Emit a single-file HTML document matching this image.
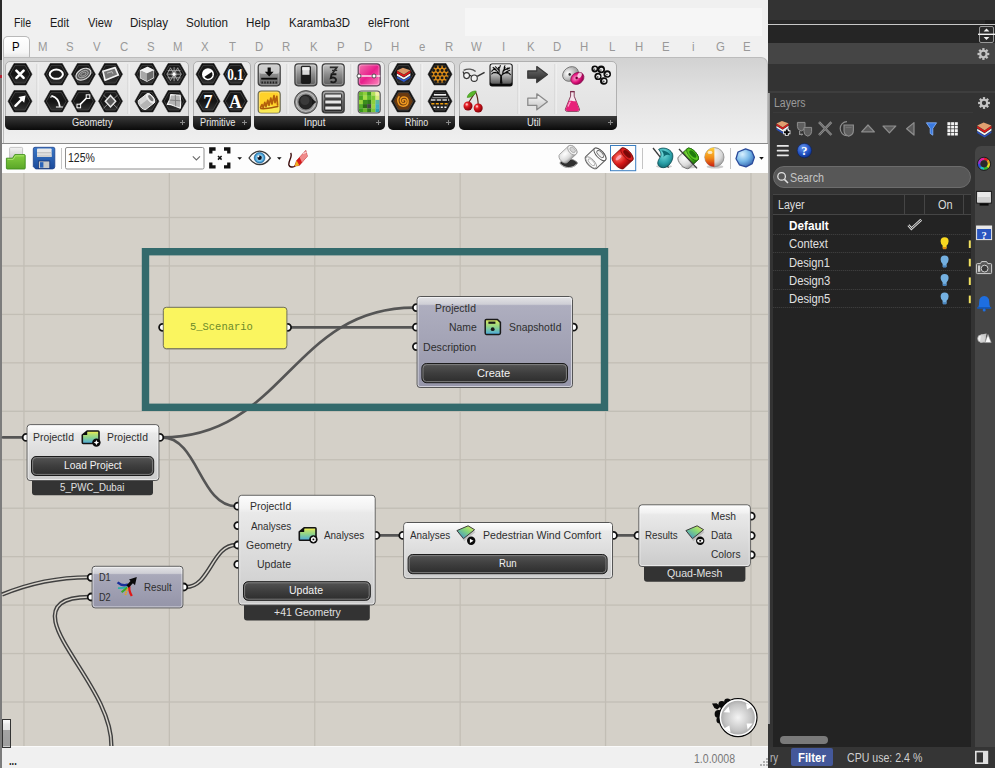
<!DOCTYPE html>
<html><head><meta charset="utf-8"><title>Grasshopper</title>
<style>
html,body{margin:0;padding:0;overflow:hidden;}
body{width:995px;height:768px;position:relative;overflow:hidden;background:#f0f0f0;font-family:"Liberation Sans", sans-serif;}
.b{position:absolute;box-sizing:border-box;}
.t{position:absolute;white-space:nowrap;transform-origin:0 50%;display:block;}
svg{overflow:visible;}
</style></head><body>
<div class="b" style="left:0px;top:0px;width:769px;height:768px;background:#f0f0f0;"></div>
<div class="b" style="left:465px;top:8px;width:297px;height:27.5px;background:#f6f6f6;"></div>
<span class="t" style="left:14.00px;top:13.70px;font-size:12px;line-height:18px;color:#1a1a1a;font-weight:400;font-family:'Liberation Sans', sans-serif;transform:scaleX(0.8792);">File</span>
<span class="t" style="left:50.00px;top:13.70px;font-size:12px;line-height:18px;color:#1a1a1a;font-weight:400;font-family:'Liberation Sans', sans-serif;transform:scaleX(0.9189);">Edit</span>
<span class="t" style="left:88.00px;top:13.70px;font-size:12px;line-height:18px;color:#1a1a1a;font-weight:400;font-family:'Liberation Sans', sans-serif;transform:scaleX(0.9305);">View</span>
<span class="t" style="left:130.00px;top:13.70px;font-size:12px;line-height:18px;color:#1a1a1a;font-weight:400;font-family:'Liberation Sans', sans-serif;transform:scaleX(0.9658);">Display</span>
<span class="t" style="left:186.00px;top:13.70px;font-size:12px;line-height:18px;color:#1a1a1a;font-weight:400;font-family:'Liberation Sans', sans-serif;transform:scaleX(0.9685);">Solution</span>
<span class="t" style="left:246.00px;top:13.70px;font-size:12px;line-height:18px;color:#1a1a1a;font-weight:400;font-family:'Liberation Sans', sans-serif;transform:scaleX(0.9725);">Help</span>
<span class="t" style="left:289.00px;top:13.70px;font-size:12px;line-height:18px;color:#1a1a1a;font-weight:400;font-family:'Liberation Sans', sans-serif;transform:scaleX(0.9527);">Karamba3D</span>
<span class="t" style="left:368.00px;top:13.70px;font-size:12px;line-height:18px;color:#1a1a1a;font-weight:400;font-family:'Liberation Sans', sans-serif;transform:scaleX(0.9314);">eleFront</span>
<div class="b" style="left:3px;top:36px;width:27px;height:23px;background:linear-gradient(#ffffff,#f6f6f6 70%,#e0e0e0);border:1px solid #b9b9b9;border-bottom:none;border-radius:5px 5px 0 0;"></div>
<span class="t" style="left:11.70px;top:37.80px;font-size:12px;line-height:18px;color:#000;font-weight:400;font-family:'Liberation Sans', sans-serif;transform:scaleX(0.9500);">P</span>
<span class="t" style="left:37.85px;top:37.80px;font-size:12px;line-height:18px;color:#999;font-weight:400;font-family:'Liberation Sans', sans-serif;transform:scaleX(0.9500);">M</span>
<span class="t" style="left:65.90px;top:37.80px;font-size:12px;line-height:18px;color:#999;font-weight:400;font-family:'Liberation Sans', sans-serif;transform:scaleX(0.9500);">S</span>
<span class="t" style="left:93.00px;top:37.80px;font-size:12px;line-height:18px;color:#999;font-weight:400;font-family:'Liberation Sans', sans-serif;transform:scaleX(0.9500);">V</span>
<span class="t" style="left:119.78px;top:37.80px;font-size:12px;line-height:18px;color:#999;font-weight:400;font-family:'Liberation Sans', sans-serif;transform:scaleX(0.9500);">C</span>
<span class="t" style="left:147.20px;top:37.80px;font-size:12px;line-height:18px;color:#999;font-weight:400;font-family:'Liberation Sans', sans-serif;transform:scaleX(0.9500);">S</span>
<span class="t" style="left:173.35px;top:37.80px;font-size:12px;line-height:18px;color:#999;font-weight:400;font-family:'Liberation Sans', sans-serif;transform:scaleX(0.9500);">M</span>
<span class="t" style="left:201.40px;top:37.80px;font-size:12px;line-height:18px;color:#999;font-weight:400;font-family:'Liberation Sans', sans-serif;transform:scaleX(0.9500);">X</span>
<span class="t" style="left:228.82px;top:37.80px;font-size:12px;line-height:18px;color:#999;font-weight:400;font-family:'Liberation Sans', sans-serif;transform:scaleX(0.9500);">T</span>
<span class="t" style="left:255.28px;top:37.80px;font-size:12px;line-height:18px;color:#999;font-weight:400;font-family:'Liberation Sans', sans-serif;transform:scaleX(0.9500);">D</span>
<span class="t" style="left:282.38px;top:37.80px;font-size:12px;line-height:18px;color:#999;font-weight:400;font-family:'Liberation Sans', sans-serif;transform:scaleX(0.9500);">R</span>
<span class="t" style="left:309.80px;top:37.80px;font-size:12px;line-height:18px;color:#999;font-weight:400;font-family:'Liberation Sans', sans-serif;transform:scaleX(0.9500);">K</span>
<span class="t" style="left:336.90px;top:37.80px;font-size:12px;line-height:18px;color:#999;font-weight:400;font-family:'Liberation Sans', sans-serif;transform:scaleX(0.9500);">P</span>
<span class="t" style="left:363.68px;top:37.80px;font-size:12px;line-height:18px;color:#999;font-weight:400;font-family:'Liberation Sans', sans-serif;transform:scaleX(0.9500);">D</span>
<span class="t" style="left:390.78px;top:37.80px;font-size:12px;line-height:18px;color:#999;font-weight:400;font-family:'Liberation Sans', sans-serif;transform:scaleX(0.9500);">H</span>
<span class="t" style="left:418.83px;top:37.80px;font-size:12px;line-height:18px;color:#999;font-weight:400;font-family:'Liberation Sans', sans-serif;transform:scaleX(0.9500);">e</span>
<span class="t" style="left:444.98px;top:37.80px;font-size:12px;line-height:18px;color:#999;font-weight:400;font-family:'Liberation Sans', sans-serif;transform:scaleX(0.9500);">R</span>
<span class="t" style="left:470.82px;top:37.80px;font-size:12px;line-height:18px;color:#999;font-weight:400;font-family:'Liberation Sans', sans-serif;transform:scaleX(0.9500);">W</span>
<span class="t" style="left:501.72px;top:37.80px;font-size:12px;line-height:18px;color:#999;font-weight:400;font-family:'Liberation Sans', sans-serif;transform:scaleX(0.9500);">I</span>
<span class="t" style="left:526.60px;top:37.80px;font-size:12px;line-height:18px;color:#999;font-weight:400;font-family:'Liberation Sans', sans-serif;transform:scaleX(0.9500);">K</span>
<span class="t" style="left:553.38px;top:37.80px;font-size:12px;line-height:18px;color:#999;font-weight:400;font-family:'Liberation Sans', sans-serif;transform:scaleX(0.9500);">D</span>
<span class="t" style="left:580.48px;top:37.80px;font-size:12px;line-height:18px;color:#999;font-weight:400;font-family:'Liberation Sans', sans-serif;transform:scaleX(0.9500);">H</span>
<span class="t" style="left:608.53px;top:37.80px;font-size:12px;line-height:18px;color:#999;font-weight:400;font-family:'Liberation Sans', sans-serif;transform:scaleX(0.9500);">L</span>
<span class="t" style="left:634.68px;top:37.80px;font-size:12px;line-height:18px;color:#999;font-weight:400;font-family:'Liberation Sans', sans-serif;transform:scaleX(0.9500);">H</span>
<span class="t" style="left:662.10px;top:37.80px;font-size:12px;line-height:18px;color:#999;font-weight:400;font-family:'Liberation Sans', sans-serif;transform:scaleX(0.9500);">E</span>
<span class="t" style="left:691.73px;top:37.80px;font-size:12px;line-height:18px;color:#999;font-weight:400;font-family:'Liberation Sans', sans-serif;transform:scaleX(0.9500);">i</span>
<span class="t" style="left:715.67px;top:37.80px;font-size:12px;line-height:18px;color:#999;font-weight:400;font-family:'Liberation Sans', sans-serif;transform:scaleX(0.9500);">G</span>
<span class="t" style="left:743.40px;top:37.80px;font-size:12px;line-height:18px;color:#999;font-weight:400;font-family:'Liberation Sans', sans-serif;transform:scaleX(0.9500);">E</span>
<div class="b" style="left:3px;top:57px;width:765px;height:86px;background:linear-gradient(#d2d2d2,#e2e2e2 45%,#f0f0f0);border:1px solid #bcbcbc;border-radius:0 7px 0 0;border-bottom:none;"></div>
<div class="b" style="left:5px;top:61px;width:184px;height:69px;background:linear-gradient(#ebebeb,#e0e0e0);border:1px solid #b0b0b0;border-radius:5px;"></div>
<div class="b" style="left:5px;top:116px;width:184px;height:14px;background:linear-gradient(#3a3a3a,#0a0a0a);border-radius:0 0 5px 5px;"></div>
<span class="t" style="left:72.20px;top:113.75px;font-size:10.5px;line-height:16.5px;color:#e8e8e8;font-weight:400;font-family:'Liberation Sans', sans-serif;transform:scaleX(0.8807);">Geometry</span>
<div class="b" style="left:179.6px;top:121.8px;width:5.6px;height:1.4px;background:#8a8a8a;"></div>
<div class="b" style="left:181.70000000000002px;top:119.7px;width:1.4px;height:5.6px;background:#8a8a8a;"></div>
<div class="b" style="left:193px;top:61px;width:58px;height:69px;background:linear-gradient(#ebebeb,#e0e0e0);border:1px solid #b0b0b0;border-radius:5px;"></div>
<div class="b" style="left:193px;top:116px;width:58px;height:14px;background:linear-gradient(#3a3a3a,#0a0a0a);border-radius:0 0 5px 5px;"></div>
<span class="t" style="left:199.80px;top:113.75px;font-size:10.5px;line-height:16.5px;color:#e8e8e8;font-weight:400;font-family:'Liberation Sans', sans-serif;transform:scaleX(0.8794);">Primitive</span>
<div class="b" style="left:241.6px;top:121.8px;width:5.6px;height:1.4px;background:#8a8a8a;"></div>
<div class="b" style="left:243.70000000000002px;top:119.7px;width:1.4px;height:5.6px;background:#8a8a8a;"></div>
<div class="b" style="left:254px;top:61px;width:131px;height:69px;background:linear-gradient(#ebebeb,#e0e0e0);border:1px solid #b0b0b0;border-radius:5px;"></div>
<div class="b" style="left:254px;top:116px;width:131px;height:14px;background:linear-gradient(#3a3a3a,#0a0a0a);border-radius:0 0 5px 5px;"></div>
<span class="t" style="left:304.35px;top:113.75px;font-size:10.5px;line-height:16.5px;color:#e8e8e8;font-weight:400;font-family:'Liberation Sans', sans-serif;transform:scaleX(0.9121);">Input</span>
<div class="b" style="left:375.59999999999997px;top:121.8px;width:5.6px;height:1.4px;background:#8a8a8a;"></div>
<div class="b" style="left:377.7px;top:119.7px;width:1.4px;height:5.6px;background:#8a8a8a;"></div>
<div class="b" style="left:388px;top:61px;width:67px;height:69px;background:linear-gradient(#ebebeb,#e0e0e0);border:1px solid #b0b0b0;border-radius:5px;"></div>
<div class="b" style="left:388px;top:116px;width:67px;height:14px;background:linear-gradient(#3a3a3a,#0a0a0a);border-radius:0 0 5px 5px;"></div>
<span class="t" style="left:405.45px;top:113.75px;font-size:10.5px;line-height:16.5px;color:#e8e8e8;font-weight:400;font-family:'Liberation Sans', sans-serif;transform:scaleX(0.8420);">Rhino</span>
<div class="b" style="left:445.59999999999997px;top:121.8px;width:5.6px;height:1.4px;background:#8a8a8a;"></div>
<div class="b" style="left:447.7px;top:119.7px;width:1.4px;height:5.6px;background:#8a8a8a;"></div>
<div class="b" style="left:459px;top:61px;width:158px;height:69px;background:linear-gradient(#ebebeb,#e0e0e0);border:1px solid #b0b0b0;border-radius:5px;"></div>
<div class="b" style="left:459px;top:116px;width:158px;height:14px;background:linear-gradient(#3a3a3a,#0a0a0a);border-radius:0 0 5px 5px;"></div>
<span class="t" style="left:526.70px;top:113.75px;font-size:10.5px;line-height:16.5px;color:#e8e8e8;font-weight:400;font-family:'Liberation Sans', sans-serif;transform:scaleX(0.8967);">Util</span>
<div class="b" style="left:607.6px;top:121.8px;width:5.6px;height:1.4px;background:#8a8a8a;"></div>
<div class="b" style="left:609.6999999999999px;top:119.7px;width:1.4px;height:5.6px;background:#8a8a8a;"></div>
<svg class="b" style="left:0px;top:0px;" width="769" height="144" viewBox="0 0 769 144"><defs>
<linearGradient id="hexg" x1="0" y1="0" x2="0" y2="1"><stop offset="0" stop-color="#1c1c1c"/><stop offset="0.5" stop-color="#141414"/><stop offset="1" stop-color="#303030"/></linearGradient>
<linearGradient id="sqg" x1="0" y1="0" x2="0" y2="1"><stop offset="0" stop-color="#c8c8c8"/><stop offset="0.5" stop-color="#8a8a8a"/><stop offset="1" stop-color="#5a5a5a"/></linearGradient>
<linearGradient id="sqd" x1="0" y1="0" x2="0" y2="1"><stop offset="0" stop-color="#9a9a9a"/><stop offset="0.5" stop-color="#4a4a4a"/><stop offset="1" stop-color="#2a2a2a"/></linearGradient>
<linearGradient id="pinkg" x1="0" y1="0" x2="1" y2="1"><stop offset="0" stop-color="#f27ab0"/><stop offset="0.5" stop-color="#e8208c"/><stop offset="1" stop-color="#ff8fc0"/></linearGradient>
<radialGradient id="sphg" cx="0.4" cy="0.35" r="0.7"><stop offset="0" stop-color="#ffffff"/><stop offset="1" stop-color="#8a8a8a"/></radialGradient>
<radialGradient id="cher" cx="0.35" cy="0.35" r="0.7"><stop offset="0" stop-color="#ff6a6a"/><stop offset="0.4" stop-color="#d8141c"/><stop offset="1" stop-color="#7a0008"/></radialGradient>
<radialGradient id="pinks" cx="0.4" cy="0.4" r="0.7"><stop offset="0" stop-color="#ff9ad0"/><stop offset="0.5" stop-color="#e0107a"/><stop offset="1" stop-color="#7a0040"/></radialGradient>
<linearGradient id="treeg" x1="0" y1="0" x2="0" y2="1"><stop offset="0" stop-color="#f6f6f6"/><stop offset="0.55" stop-color="#b4b4b4"/><stop offset="1" stop-color="#5a5a5a"/></linearGradient>
</defs><polygon points="8.0,74.2 14.0,63.5 26.0,63.5 32.0,74.2 26.0,84.9 14.0,84.9" fill="#0c0c0c" stroke="#2a2a2a" stroke-width="0.6" stroke-linejoin="round"/><polygon points="10.0,74.2 15.0,65.3 25.0,65.3 30.0,74.2 25.0,83.1 15.0,83.1" fill="url(#hexg)" stroke="#4a4a4a" stroke-width="0.8" stroke-linejoin="round"/><g transform="translate(20,74.2)"><path d="M-3.6,-3.6L3.6,3.6M3.6,-3.6L-3.6,3.6" stroke="#fff" stroke-width="2.6" stroke-linecap="round"/></g><polygon points="8.0,101.2 14.0,90.5 26.0,90.5 32.0,101.2 26.0,111.9 14.0,111.9" fill="#0c0c0c" stroke="#2a2a2a" stroke-width="0.6" stroke-linejoin="round"/><polygon points="10.0,101.2 15.0,92.3 25.0,92.3 30.0,101.2 25.0,110.1 15.0,110.1" fill="url(#hexg)" stroke="#4a4a4a" stroke-width="0.8" stroke-linejoin="round"/><g transform="translate(20,101.2)"><path d="M-4.6,4.6L2,-2" stroke="#fff" stroke-width="2.4" stroke-linecap="round"/><polygon points="5.6,-5.6 -1.6,-4.2 4.2,1.6" fill="#fff"/></g><polygon points="44.3,74.2 50.3,63.5 62.3,63.5 68.3,74.2 62.3,84.9 50.3,84.9" fill="#0c0c0c" stroke="#2a2a2a" stroke-width="0.6" stroke-linejoin="round"/><polygon points="46.3,74.2 51.3,65.3 61.3,65.3 66.3,74.2 61.3,83.1 51.3,83.1" fill="url(#hexg)" stroke="#4a4a4a" stroke-width="0.8" stroke-linejoin="round"/><g transform="translate(56.3,74.2)"><ellipse cx="0" cy="0" rx="6.6" ry="4.6" fill="#1c1c1c" stroke="#fff" stroke-width="2"/></g><polygon points="71.4,74.2 77.4,63.5 89.4,63.5 95.4,74.2 89.4,84.9 77.4,84.9" fill="#0c0c0c" stroke="#2a2a2a" stroke-width="0.6" stroke-linejoin="round"/><polygon points="73.4,74.2 78.4,65.3 88.4,65.3 93.4,74.2 88.4,83.1 78.4,83.1" fill="url(#hexg)" stroke="#4a4a4a" stroke-width="0.8" stroke-linejoin="round"/><g transform="translate(83.4,74.2)"><g transform="rotate(-28)"><ellipse rx="8" ry="5.2" fill="#5a5a5a" stroke="#d8d8d8" stroke-width="1.2"/><ellipse rx="5.2" ry="3" fill="none" stroke="#bdbdbd" stroke-width="0.8"/><ellipse rx="3" ry="1.5" fill="none" stroke="#a8a8a8" stroke-width="0.8"/></g></g><polygon points="98.5,74.2 104.5,63.5 116.5,63.5 122.5,74.2 116.5,84.9 104.5,84.9" fill="#0c0c0c" stroke="#2a2a2a" stroke-width="0.6" stroke-linejoin="round"/><polygon points="100.5,74.2 105.5,65.3 115.5,65.3 120.5,74.2 115.5,83.1 105.5,83.1" fill="url(#hexg)" stroke="#4a4a4a" stroke-width="0.8" stroke-linejoin="round"/><g transform="translate(110.5,74.2)"><polygon points="-7.6,-3 4.6,-6.6 7.8,0.8 -5.4,6" fill="#777" stroke="#f2f2f2" stroke-width="1.7" stroke-linejoin="round"/><path d="M-3.5,-1L1.5,-2.6L2.4,-0.4" stroke="#ccc" stroke-width="0.8" fill="none"/></g><polygon points="44.3,101.2 50.3,90.5 62.3,90.5 68.3,101.2 62.3,111.9 50.3,111.9" fill="#0c0c0c" stroke="#2a2a2a" stroke-width="0.6" stroke-linejoin="round"/><polygon points="46.3,101.2 51.3,92.3 61.3,92.3 66.3,101.2 61.3,110.1 51.3,110.1" fill="url(#hexg)" stroke="#4a4a4a" stroke-width="0.8" stroke-linejoin="round"/><g transform="translate(56.3,101.2)"><path d="M-4.6,-5.4C0.5,-4.2 3,0.5 3.6,5.6" stroke="#fff" stroke-width="1.7" fill="none"/><path d="M-0.4,5.8L6.6,5.8" stroke="#ddd" stroke-width="1.2"/><path d="M-5.6,-3.4L-4.6,-5.8" stroke="#ddd" stroke-width="1.2"/></g><polygon points="71.4,101.2 77.4,90.5 89.4,90.5 95.4,101.2 89.4,111.9 77.4,111.9" fill="#0c0c0c" stroke="#2a2a2a" stroke-width="0.6" stroke-linejoin="round"/><polygon points="73.4,101.2 78.4,92.3 88.4,92.3 93.4,101.2 88.4,110.1 78.4,110.1" fill="url(#hexg)" stroke="#4a4a4a" stroke-width="0.8" stroke-linejoin="round"/><g transform="translate(83.4,101.2)"><path d="M-4.4,4.4L4.4,-4.4" stroke="#fff" stroke-width="1.6"/><rect x="-6.4" y="3" width="3.6" height="3.6" fill="#222" stroke="#fff" stroke-width="1"/><rect x="2.8" y="-6.4" width="3.6" height="3.6" fill="#222" stroke="#fff" stroke-width="1"/></g><polygon points="98.5,101.2 104.5,90.5 116.5,90.5 122.5,101.2 116.5,111.9 104.5,111.9" fill="#0c0c0c" stroke="#2a2a2a" stroke-width="0.6" stroke-linejoin="round"/><polygon points="100.5,101.2 105.5,92.3 115.5,92.3 120.5,101.2 115.5,110.1 105.5,110.1" fill="url(#hexg)" stroke="#4a4a4a" stroke-width="0.8" stroke-linejoin="round"/><g transform="translate(110.5,101.2)"><path d="M-7,-6L7,7M7,-6L-7,7" stroke="#8a8a8a" stroke-width="1"/><polygon points="0,-5.8 5.2,0 0,5.8 -5.2,0" fill="#5e5e5e" stroke="#e8e8e8" stroke-width="1.5"/></g><polygon points="134.9,74.2 140.9,63.5 152.9,63.5 158.9,74.2 152.9,84.9 140.9,84.9" fill="#0c0c0c" stroke="#2a2a2a" stroke-width="0.6" stroke-linejoin="round"/><polygon points="136.9,74.2 141.9,65.3 151.9,65.3 156.9,74.2 151.9,83.1 141.9,83.1" fill="url(#hexg)" stroke="#4a4a4a" stroke-width="0.8" stroke-linejoin="round"/><g transform="translate(146.9,74.2)"><polygon points="-6.4,-3.6 0.6,-6.8 6.6,-3.8 6.6,3.4 0,7 -6.4,3.8" fill="#9a9a9a" stroke="#f4f4f4" stroke-width="1.3" stroke-linejoin="round"/><polygon points="-6.4,-3.6 0.6,-6.8 6.6,-3.8 0,-0.6" fill="#f2f2f2"/><polygon points="0,-0.6 6.6,-3.8 6.6,3.4 0,7" fill="#6c6c6c"/><polygon points="-6.4,-3.6 0,-0.6 0,7 -6.4,3.8" fill="#a8a8a8"/></g><polygon points="162.1,74.2 168.1,63.5 180.1,63.5 186.1,74.2 180.1,84.9 168.1,84.9" fill="#0c0c0c" stroke="#2a2a2a" stroke-width="0.6" stroke-linejoin="round"/><polygon points="164.1,74.2 169.1,65.3 179.1,65.3 184.1,74.2 179.1,83.1 169.1,83.1" fill="url(#hexg)" stroke="#4a4a4a" stroke-width="0.8" stroke-linejoin="round"/><g transform="translate(174.1,74.2)"><circle r="7" fill="#2a2a2a"/><path d="M-7.6,0H7.6M-3.8,-6.6L3.8,6.6M3.8,-6.6L-3.8,6.6M-6.4,-3.6H6.4M-6.4,3.6H6.4M-7,-0.2L-3.6,-6.4M7,-0.2L3.6,-6.4M-7,0.2L-3.6,6.4M7,0.2L3.6,6.4M0,-7V7" stroke="#b8b8b8" stroke-width="0.75"/><circle r="1.6" fill="#fff"/><circle r="3" fill="#fff" opacity="0.25"/></g><polygon points="134.9,101.2 140.9,90.5 152.9,90.5 158.9,101.2 152.9,111.9 140.9,111.9" fill="#0c0c0c" stroke="#2a2a2a" stroke-width="0.6" stroke-linejoin="round"/><polygon points="136.9,101.2 141.9,92.3 151.9,92.3 156.9,101.2 151.9,110.1 141.9,110.1" fill="url(#hexg)" stroke="#4a4a4a" stroke-width="0.8" stroke-linejoin="round"/><g transform="translate(146.9,101.2)"><g transform="rotate(-38)"><path d="M-5.6,-5.8H4.6A2.8,5.8 0 0 1 4.6,5.8H-5.6A2.8,5.8 0 0 1 -5.6,-5.8Z" fill="#b4b4b4" stroke="#f0f0f0" stroke-width="0.9"/><path d="M-5.6,-5.8H4.6V-1H-7.4Z" fill="#e4e4e4" opacity="0.7"/><ellipse cx="4.6" cy="0" rx="2.8" ry="5.8" fill="#e6e6e6" stroke="#f6f6f6" stroke-width="0.7"/><ellipse cx="4.9" cy="0" rx="1.6" ry="3.6" fill="#7a7a7a"/></g></g><polygon points="162.1,101.2 168.1,90.5 180.1,90.5 186.1,101.2 180.1,111.9 168.1,111.9" fill="#0c0c0c" stroke="#2a2a2a" stroke-width="0.6" stroke-linejoin="round"/><polygon points="164.1,101.2 169.1,92.3 179.1,92.3 184.1,101.2 179.1,110.1 169.1,110.1" fill="url(#hexg)" stroke="#4a4a4a" stroke-width="0.8" stroke-linejoin="round"/><g transform="translate(174.1,101.2)"><path d="M-3.4,-6.6L6,-6C6.8,-1 6.8,3 6.2,7L-1,4.2C-2.6,3.4 -4.6,3 -6.8,3.2C-4.6,0 -3.4,-3 -3.4,-6.6Z" fill="#b4b4b4" stroke="#f6f6f6" stroke-width="1.1" stroke-linejoin="round"/><path d="M-4.8,-1.2L6.4,-0.4M1.2,-6.2L1.6,5.2" stroke="#7a7a7a" stroke-width="0.9"/></g><polygon points="196.0,74.2 202.0,63.5 214.0,63.5 220.0,74.2 214.0,84.9 202.0,84.9" fill="#0c0c0c" stroke="#2a2a2a" stroke-width="0.6" stroke-linejoin="round"/><polygon points="198.0,74.2 203.0,65.3 213.0,65.3 218.0,74.2 213.0,83.1 203.0,83.1" fill="url(#hexg)" stroke="#4a4a4a" stroke-width="0.8" stroke-linejoin="round"/><g transform="translate(208,74.2)"><circle r="6" fill="#fff"/><path d="M-3.5,2.6A4.35,4.35 0 0 0 3.7,-2.3Z" fill="#111"/></g><polygon points="223.4,74.2 229.4,63.5 241.4,63.5 247.4,74.2 241.4,84.9 229.4,84.9" fill="#0c0c0c" stroke="#2a2a2a" stroke-width="0.6" stroke-linejoin="round"/><polygon points="225.4,74.2 230.4,65.3 240.4,65.3 245.4,74.2 240.4,83.1 230.4,83.1" fill="url(#hexg)" stroke="#4a4a4a" stroke-width="0.8" stroke-linejoin="round"/><g transform="translate(235.4,74.2)"><text x="0" y="5.4" text-anchor="middle" font-family="Liberation Serif, serif" font-weight="700" font-size="16.5" fill="#fff" transform="scale(0.8,1)">0.1</text></g><polygon points="196.0,101.2 202.0,90.5 214.0,90.5 220.0,101.2 214.0,111.9 202.0,111.9" fill="#0c0c0c" stroke="#2a2a2a" stroke-width="0.6" stroke-linejoin="round"/><polygon points="198.0,101.2 203.0,92.3 213.0,92.3 218.0,101.2 213.0,110.1 203.0,110.1" fill="url(#hexg)" stroke="#4a4a4a" stroke-width="0.8" stroke-linejoin="round"/><g transform="translate(208,101.2)"><text x="0" y="6.4" text-anchor="middle" font-family="Liberation Serif, serif" font-weight="700" font-size="19.5" fill="#fff" transform="scale(0.95,1)">7</text></g><polygon points="223.4,101.2 229.4,90.5 241.4,90.5 247.4,101.2 241.4,111.9 229.4,111.9" fill="#0c0c0c" stroke="#2a2a2a" stroke-width="0.6" stroke-linejoin="round"/><polygon points="225.4,101.2 230.4,92.3 240.4,92.3 245.4,101.2 240.4,110.1 230.4,110.1" fill="url(#hexg)" stroke="#4a4a4a" stroke-width="0.8" stroke-linejoin="round"/><g transform="translate(235.4,101.2)"><text x="0" y="6.4" text-anchor="middle" font-family="Liberation Serif, serif" font-weight="700" font-size="19.5" fill="#fff" transform="scale(0.9,1)">A</text></g><rect x="36.5" y="64" width="1" height="50" fill="#cfcfcf"/><rect x="37.5" y="64" width="1" height="50" fill="#f6f6f6"/><rect x="127.5" y="64" width="1" height="50" fill="#cfcfcf"/><rect x="128.5" y="64" width="1" height="50" fill="#f6f6f6"/><rect x="286.5" y="64" width="1" height="50" fill="#cfcfcf"/><rect x="287.5" y="64" width="1" height="50" fill="#f6f6f6"/><rect x="350.5" y="64" width="1" height="50" fill="#cfcfcf"/><rect x="351.5" y="64" width="1" height="50" fill="#f6f6f6"/><rect x="420.5" y="64" width="1" height="50" fill="#cfcfcf"/><rect x="421.5" y="64" width="1" height="50" fill="#f6f6f6"/><rect x="517.5" y="64" width="1" height="50" fill="#cfcfcf"/><rect x="518.5" y="64" width="1" height="50" fill="#f6f6f6"/><rect x="554.5" y="64" width="1" height="50" fill="#cfcfcf"/><rect x="555.5" y="64" width="1" height="50" fill="#f6f6f6"/><rect x="258.2" y="63.8" width="22" height="22" rx="3.2" fill="url(#sqg)" stroke="#3c3c3c" stroke-width="1.2"/><rect x="259.5" y="65.1" width="19.4" height="19.4" rx="2.2" fill="none" stroke="rgba(255,255,255,0.35)" stroke-width="0.8"/><g transform="translate(269.2,74.8)"><rect x="-10" y="-10" width="20" height="9" rx="2.5" fill="#d2d2d2" opacity="0.85"/><path d="M-1.6,-7.2H1.6V-3H4.4L0,1.8L-4.4,-3H-1.6Z" fill="#0a0a0a"/><rect x="-8" y="3" width="16" height="1.8" fill="#0a0a0a"/><path d="M-7,6.8v1.8M-4.2,6.8v1.8M-1.4,6.8v1.8M1.4,6.8v1.8M4.2,6.8v1.8M7,6.8v1.8" stroke="#1a1a1a" stroke-width="1.3"/></g><rect x="258.2" y="91" width="22" height="22" rx="3.2" fill="#ffd22a" stroke="#6a6a5a" stroke-width="1.2"/><rect x="259.5" y="92.3" width="19.4" height="19.4" rx="2.2" fill="none" stroke="rgba(255,255,255,0.35)" stroke-width="0.8"/><rect x="259.4" y="106" width="19.6" height="6.6" fill="#f6ee5a" opacity="0.8"/><g transform="translate(269.2,102)"><path d="M-8.6,5.4L-7.2,2.6L-6,5.6L-4.4,0.4L-3.2,4.6L-1.4,-1.8L-0.2,3.4L1.6,-4L2.8,2L4.8,-6.4L5.8,0.6L7.6,-5.6L8.4,3" stroke="#b4600c" stroke-width="1.7" fill="none" stroke-linejoin="round" stroke-linecap="round"/><path d="M-8.4,6.6C-3,7.4 3,5.6 8.6,4.4" stroke="#a8560a" stroke-width="1.5" fill="none" stroke-linecap="round"/></g><rect x="294.9" y="63.8" width="22" height="22" rx="3.2" fill="url(#sqg)" stroke="#3c3c3c" stroke-width="1.2"/><rect x="296.2" y="65.1" width="19.4" height="19.4" rx="2.2" fill="none" stroke="rgba(255,255,255,0.35)" stroke-width="0.8"/><g transform="translate(305.9,74.8)"><rect x="-4.6" y="-8.6" width="9.2" height="17.2" rx="1" fill="#1a1a1a" stroke="#111" stroke-width="0.8"/><rect x="-3.6" y="-7.6" width="7.2" height="7.6" fill="#d9d9d9"/><rect x="-3.6" y="-7.6" width="7.2" height="3" fill="#f2f2f2"/></g><g transform="translate(305.9,102)"><circle r="11.4" fill="#8a8a8a" stroke="#4a4a4a" stroke-width="1"/><circle r="9.4" fill="none" stroke="#bdbdbd" stroke-width="1.2"/><path d="M6,-3.6L10.4,0L6,3.6Z" fill="#1e1e1e"/><circle r="7" fill="#262626" stroke="#111" stroke-width="0.8"/><circle cx="-1" cy="-1.5" r="4.6" fill="#3a3a3a"/></g><rect x="322.2" y="63.8" width="22" height="22" rx="3.2" fill="url(#sqg)" stroke="#3c3c3c" stroke-width="1.2"/><rect x="323.5" y="65.1" width="19.4" height="19.4" rx="2.2" fill="none" stroke="rgba(255,255,255,0.35)" stroke-width="0.8"/><g transform="translate(333.2,74.8)"><path d="M-3.4,-7.4H3.6L-0.6,-1.6" stroke="#2c2c2c" stroke-width="1.8" fill="none"/><path d="M-1.2,-4.4H4" stroke="#2c2c2c" stroke-width="1.3"/><path d="M3.2,-0.6H-1.6L-2.4,3.2C0.8,2 3.4,3.6 2.6,6C1.8,8 -1.2,8 -2.6,6.6" stroke="#1a1a1a" stroke-width="1.9" fill="none"/></g><rect x="322.2" y="91" width="22" height="22" rx="3.2" fill="url(#sqd)" stroke="#3c3c3c" stroke-width="1.2"/><rect x="323.5" y="92.3" width="19.4" height="19.4" rx="2.2" fill="none" stroke="rgba(255,255,255,0.35)" stroke-width="0.8"/><g transform="translate(333.2,102)"><rect x="-8.4" y="-8" width="16.8" height="4" rx="0.8" fill="#e6e6e6" stroke="#222" stroke-width="0.9"/><rect x="-8.4" y="-2" width="16.8" height="4" rx="0.8" fill="#e6e6e6" stroke="#222" stroke-width="0.9"/><rect x="-8.4" y="4" width="16.8" height="4" rx="0.8" fill="#e6e6e6" stroke="#222" stroke-width="0.9"/></g><rect x="358.2" y="63.8" width="22" height="22" rx="3.2" fill="url(#pinkg)" stroke="#5a4a5a" stroke-width="1.2"/><rect x="359.5" y="65.1" width="19.4" height="19.4" rx="2.2" fill="none" stroke="rgba(255,255,255,0.35)" stroke-width="0.8"/><g transform="translate(369.2,74.8)"><path d="M-11,1.2H11" stroke="#fff" stroke-width="1.3"/><circle cx="-10.2" cy="1.2" r="2" fill="#fff" stroke="#333" stroke-width="0.8"/><circle cx="4.8" cy="1.2" r="2" fill="#fff" stroke="#333" stroke-width="0.8"/></g><clipPath id="gc"><rect x="358.8" y="91.6" width="20.8" height="20.8" rx="2.4"/></clipPath><g clip-path="url(#gc)"><g transform="translate(369.2,102)"><rect x="-10.5" y="-10.5" width="4.3" height="4.3" fill="#6ab82c"/><rect x="-6.3" y="-10.5" width="4.3" height="4.3" fill="#8ed03c"/><rect x="-2.1" y="-10.5" width="4.3" height="4.3" fill="#3e9a1e"/><rect x="2.1" y="-10.5" width="4.3" height="4.3" fill="#b6e25a"/><rect x="6.3" y="-10.5" width="4.3" height="4.3" fill="#f2f2a0"/><rect x="-10.5" y="-6.3" width="4.3" height="4.3" fill="#4aa822"/><rect x="-6.3" y="-6.3" width="4.3" height="4.3" fill="#a8dc4a"/><rect x="-2.1" y="-6.3" width="4.3" height="4.3" fill="#5cb82a"/><rect x="2.1" y="-6.3" width="4.3" height="4.3" fill="#7cc834"/><rect x="6.3" y="-6.3" width="4.3" height="4.3" fill="#d8ee7a"/><rect x="-10.5" y="-2.1" width="4.3" height="4.3" fill="#9ad440"/><rect x="-6.3" y="-2.1" width="4.3" height="4.3" fill="#3a8e1c"/><rect x="-2.1" y="-2.1" width="4.3" height="4.3" fill="#2f7a18"/><rect x="2.1" y="-2.1" width="4.3" height="4.3" fill="#8ed03c"/><rect x="6.3" y="-2.1" width="4.3" height="4.3" fill="#58b8a0"/><rect x="-10.5" y="2.1" width="4.3" height="4.3" fill="#52ac26"/><rect x="-6.3" y="2.1" width="4.3" height="4.3" fill="#2a6a16"/><rect x="-2.1" y="2.1" width="4.3" height="4.3" fill="#444"/><rect x="2.1" y="2.1" width="4.3" height="4.3" fill="#9ad440"/><rect x="6.3" y="2.1" width="4.3" height="4.3" fill="#40b0c0"/><rect x="-10.5" y="6.3" width="4.3" height="4.3" fill="#3a9a1e"/><rect x="-6.3" y="6.3" width="4.3" height="4.3" fill="#6ab82c"/><rect x="-2.1" y="6.3" width="4.3" height="4.3" fill="#2f7a18"/><rect x="2.1" y="6.3" width="4.3" height="4.3" fill="#7cc834"/><rect x="6.3" y="6.3" width="4.3" height="4.3" fill="#2aa0b8"/></g></g><rect x="358.2" y="91" width="22" height="22" rx="3.2" fill="none" stroke="#5a5a5a" stroke-width="1.2"/><polygon points="391.4,74.2 397.4,63.5 409.4,63.5 415.4,74.2 409.4,84.9 397.4,84.9" fill="#0c0c0c" stroke="#2a2a2a" stroke-width="0.6" stroke-linejoin="round"/><polygon points="393.4,74.2 398.4,65.3 408.4,65.3 413.4,74.2 408.4,83.1 398.4,83.1" fill="url(#hexg)" stroke="#4a4a4a" stroke-width="0.8" stroke-linejoin="round"/><g transform="translate(403.4,74.2)"><polygon points="-6.5,2 0.5,5.8 7,1.6 7,3.6 0.5,7.8 -6.5,4" fill="#2a55c8"/><polygon points="-6.5,-0.6 0.5,3.2 7,-1 7,1.2 0.5,5.4 -6.5,1.6" fill="#f4f4f4"/><polygon points="-6.5,-3.4 0.5,0.6 7,-3.6 7,-1.4 0.5,2.8 -6.5,-1" fill="#e01818"/><polygon points="-6.5,-3.8 -0.5,-6.4 7,-4 0.5,0.4" fill="#d89868"/></g><polygon points="428.0,74.2 434.0,63.5 446.0,63.5 452.0,74.2 446.0,84.9 434.0,84.9" fill="#0c0c0c" stroke="#2a2a2a" stroke-width="0.6" stroke-linejoin="round"/><polygon points="430.0,74.2 435.0,65.3 445.0,65.3 450.0,74.2 445.0,83.1 435.0,83.1" fill="url(#hexg)" stroke="#4a4a4a" stroke-width="0.8" stroke-linejoin="round"/><g transform="translate(440,74.2)"><polygon points="-9.4,0 -4.7,-8.4 4.7,-8.4 9.4,0 4.7,8.4 -4.7,8.4" fill="#d88a18"/><circle cx="-6.3" cy="-3.7" r="1.45" fill="#1a1a1a"/><circle cx="-8.4" cy="0.0" r="1.45" fill="#1a1a1a"/><circle cx="-6.3" cy="3.7" r="1.45" fill="#1a1a1a"/><circle cx="-4.2" cy="-7.4" r="1.45" fill="#1a1a1a"/><circle cx="-2.1" cy="-3.7" r="1.45" fill="#1a1a1a"/><circle cx="-4.2" cy="0.0" r="1.45" fill="#1a1a1a"/><circle cx="-2.1" cy="3.7" r="1.45" fill="#1a1a1a"/><circle cx="-4.2" cy="7.4" r="1.45" fill="#1a1a1a"/><circle cx="0.0" cy="-7.4" r="1.45" fill="#1a1a1a"/><circle cx="2.1" cy="-3.7" r="1.45" fill="#1a1a1a"/><circle cx="0.0" cy="0.0" r="1.45" fill="#1a1a1a"/><circle cx="2.1" cy="3.7" r="1.45" fill="#1a1a1a"/><circle cx="0.0" cy="7.4" r="1.45" fill="#1a1a1a"/><circle cx="4.2" cy="-7.4" r="1.45" fill="#1a1a1a"/><circle cx="6.3" cy="-3.7" r="1.45" fill="#1a1a1a"/><circle cx="4.2" cy="0.0" r="1.45" fill="#1a1a1a"/><circle cx="6.3" cy="3.7" r="1.45" fill="#1a1a1a"/><circle cx="4.2" cy="7.4" r="1.45" fill="#1a1a1a"/><circle cx="8.4" cy="0.0" r="1.45" fill="#1a1a1a"/></g><polygon points="391.4,101.2 397.4,90.5 409.4,90.5 415.4,101.2 409.4,111.9 397.4,111.9" fill="#0c0c0c" stroke="#2a2a2a" stroke-width="0.6" stroke-linejoin="round"/><polygon points="393.4,101.2 398.4,92.3 408.4,92.3 413.4,101.2 408.4,110.1 398.4,110.1" fill="url(#hexg)" stroke="#4a4a4a" stroke-width="0.8" stroke-linejoin="round"/><g transform="translate(403.4,101.2)"><polygon points="-9.4,0 -4.7,-8.4 4.7,-8.4 9.4,0 4.7,8.4 -4.7,8.4" fill="#6a3a10"/><path d="M0.4,0.4C-1.4,0.4 -1.4,-1.8 0.6,-1.8C3.4,-1.8 3.6,2.4 0.2,2.6C-4,2.8 -4.4,-4 0.6,-4.2C6,-4.4 6.4,4.6 0,5C-5.6,5.2 -7,-2 -4,-5" stroke="#f09a20" stroke-width="1.5" fill="none"/></g><polygon points="428.0,101.2 434.0,90.5 446.0,90.5 452.0,101.2 446.0,111.9 434.0,111.9" fill="#0c0c0c" stroke="#2a2a2a" stroke-width="0.6" stroke-linejoin="round"/><polygon points="430.0,101.2 435.0,92.3 445.0,92.3 450.0,101.2 445.0,110.1 435.0,110.1" fill="url(#hexg)" stroke="#4a4a4a" stroke-width="0.8" stroke-linejoin="round"/><g transform="translate(440,101.2)"><rect x="-6" y="-7.2" width="12" height="1.6" fill="#f0f0f0"/><rect x="-7.6" y="-4.2" width="15.2" height="1.3" fill="#8a8a8a"/><path d="M-9,-1.2H9" stroke="#d8d8d8" stroke-width="1.5" stroke-dasharray="4.5 1.2"/><path d="M-8.6,2.6H8.6" stroke="#f0a010" stroke-width="1.5" stroke-dasharray="3 1.4"/><path d="M-6.4,6H6.4" stroke="#f4f4f4" stroke-width="1.5" stroke-dasharray="2 1.6"/></g><g transform="translate(473.6,74.8)"><path d="M-10,-4.4C-6,-6.6 -1,-6 2,-3.2" stroke="#555" stroke-width="1.3" fill="none"/><path d="M3.6,1.6L11,-2.4" stroke="#333" stroke-width="1.5"/><path d="M-10.6,-3.2L-9.4,-0.4" stroke="#333" stroke-width="1.2"/><ellipse cx="-7" cy="0.8" rx="2.9" ry="3" fill="#f4f4f4" stroke="#333" stroke-width="1.1"/><ellipse cx="0.6" cy="3.4" rx="3.1" ry="3.2" fill="#f4f4f4" stroke="#333" stroke-width="1.1"/><path d="M-4.2,0.8C-3.4,0.2 -2.6,1 -2.2,1.8" stroke="#333" stroke-width="1.2" fill="none"/></g><g transform="translate(501.1,74.8)"><rect x="-11.6" y="-11.4" width="23.2" height="23" rx="2.6" fill="#0a0a0a"/><rect x="-10.6" y="-10.6" width="21.2" height="19.6" rx="1.8" fill="url(#treeg)"/><path d="M0,8.8V1.4M0,1.6C-1,-0.6 -3,-1.8 -6,-2.4M0,1.6C1,-0.8 3,-2 6.4,-2.2M-3,-1.4C-3.4,-3.6 -5,-5 -7.4,-5.8M-2.4,-1C-1.6,-3.6 -1.6,-5.4 -2.6,-7.4M1.6,-0.8C1.6,-3.4 2.6,-5.4 4,-7.2M4,-1.8C5.6,-3.4 7,-4 8.6,-4.6M-6,-2.4C-7.6,-2.4 -8.6,-1.8 -9.4,-0.8M-1.8,-4C-3,-5.6 -4.6,-6.6 -5.6,-8M2.4,-4C3.4,-5 5.6,-5.6 7,-7M6.4,-2.2C7.6,-2 8.6,-1.2 9.2,-0.2M-5,-4.8C-5.6,-6 -6.6,-6.8 -8,-7.4M3.2,-6C3,-7 3.2,-8 3.8,-9M-2.4,-6C-1.6,-7 -1,-8 -0.8,-9.2M5.8,-5.4C6.8,-5.6 7.8,-6.2 8.6,-7M-7,-5.6C-8,-5.2 -8.8,-4.6 -9.4,-3.6" stroke="#0a0a0a" stroke-width="1.1" fill="none" stroke-linecap="round"/><path d="M-1.3,8.8C-0.8,6 -0.8,3.6 -0.7,1.4H0.9C0.9,3.6 0.9,6 1.5,8.8Z" fill="#0a0a0a"/></g><g transform="translate(473.6,101.4)"><path d="M-5.4,1.8C-3,-2 -0.6,-5.6 2,-9.4" stroke="#5a2a1a" stroke-width="1.2" fill="none"/><path d="M4.6,4.4C4.6,-1 3.6,-6 2,-9.4" stroke="#5a2a1a" stroke-width="1.2" fill="none"/><path d="M-6.4,-4C-5.6,-8 -1.6,-10.6 2.6,-10.4C1.4,-6.6 -2,-3.8 -6.4,-4Z" fill="#5ab82a" stroke="#3a8a1a" stroke-width="0.6"/><circle cx="-5.6" cy="4.6" r="4.5" fill="url(#cher)"/><circle cx="4.6" cy="6.6" r="4.5" fill="url(#cher)"/><circle cx="-6.8" cy="3" r="1.1" fill="#ffc0c0" opacity="0.9"/><circle cx="3.4" cy="5" r="1.1" fill="#ffc0c0" opacity="0.9"/></g><g transform="translate(537.4,74.6)"><linearGradient id="ad" x1="0" y1="0" x2="0" y2="1"><stop offset="0" stop-color="#707070"/><stop offset="1" stop-color="#242424"/></linearGradient><path d="M-9.6,-3.6H-0.6V-8L10,0L-0.6,8V3.6H-9.6Z" fill="url(#ad)" stroke="#3a3a3a" stroke-width="1.3" stroke-linejoin="round"/></g><g transform="translate(537.4,101.8)"><linearGradient id="al" x1="0" y1="0" x2="0" y2="1"><stop offset="0" stop-color="#fafafa"/><stop offset="1" stop-color="#c4c4c4"/></linearGradient><path d="M-9.6,-3.6H-0.6V-8L10,0L-0.6,8V3.6H-9.6Z" fill="url(#al)" stroke="#8a8a8a" stroke-width="1.3" stroke-linejoin="round"/></g><g transform="translate(574,74.6)"><g transform="rotate(-35)"><ellipse cx="-2.5" cy="-2.5" rx="8.4" ry="6.8" fill="url(#sphg)" stroke="#6a6a6a" stroke-width="0.8"/><circle cx="-3.4" cy="-2.6" r="1.3" fill="#333"/></g><g transform="rotate(-35)"><ellipse cx="0.6" cy="5" rx="7" ry="5.6" fill="url(#pinks)" stroke="#8a1050" stroke-width="0.7"/></g><ellipse cx="5.6" cy="0.6" rx="2" ry="2.8" fill="#fff" opacity="0.75" transform="rotate(25 5.6 0.6)"/><circle cx="2.6" cy="3.4" r="1.2" fill="#6a0030"/></g><g transform="translate(601.4,75)"><circle cx="-6.6" cy="-6" r="3.4" fill="#0a0a0a"/><circle cx="-0.2" cy="-5.6" r="3.8" fill="#0a0a0a"/><circle cx="5.8" cy="-1" r="3.8" fill="#0a0a0a"/><circle cx="-3.4" cy="1.4" r="3.6" fill="#0a0a0a"/><circle cx="2.4" cy="6" r="3.8" fill="#0a0a0a"/><circle cx="-6.4" cy="-6.2" r="1.7" fill="#f0f0f0"/><circle cx="-6.9" cy="-5.8" r="0.77" fill="#555"/><circle cx="0" cy="-5.4" r="1.9" fill="#f0f0f0"/><circle cx="-0.5" cy="-5.0" r="0.85" fill="#555"/><circle cx="6" cy="-0.8" r="2" fill="#f0f0f0"/><circle cx="5.5" cy="-0.4" r="0.90" fill="#555"/><circle cx="-3.2" cy="1.6" r="2" fill="#f0f0f0"/><circle cx="-3.7" cy="2.0" r="0.90" fill="#555"/><circle cx="2.8" cy="6" r="2.1" fill="#f0f0f0"/><circle cx="2.3" cy="6.4" r="0.95" fill="#555"/></g><g transform="translate(572.4,101.6)"><path d="M-1.8,-10H1.8V-5.4L7,7.4C7.4,8.8 6.6,9.8 5.2,9.8H-5.2C-6.6,9.8 -7.4,8.8 -7,7.4L-1.8,-5.4Z" fill="#f6e6ee" stroke="#7a2a4a" stroke-width="0.9"/><path d="M-3.6,-0.6C-1.6,-1.6 1.6,0.2 3.8,-0.4L6.6,7.4C6.9,8.6 6.3,9.3 5.2,9.3H-5.2C-6.3,9.3 -6.9,8.6 -6.6,7.4Z" fill="#e8207a"/><path d="M-2.2,-10H2.2" stroke="#7a2a4a" stroke-width="1.3"/><path d="M-4.4,5C-3.4,2.4 -2.6,0.8 -2,0" stroke="#ffb0d0" stroke-width="1.2" fill="none"/></g></svg>
<div class="b" style="left:0px;top:143px;width:769px;height:1px;background:#8a8a8a;"></div>
<div class="b" style="left:2px;top:144px;width:767px;height:29px;background:#fdfdfd;"></div>
<svg class="b" style="left:0px;top:0px;" width="769" height="180" viewBox="0 0 769 180"><defs>
<linearGradient id="fg" x1="0" y1="0" x2="0" y2="1"><stop offset="0" stop-color="#86d040"/><stop offset="1" stop-color="#5aa628"/></linearGradient>
<linearGradient id="fb" x1="0" y1="0" x2="0" y2="1"><stop offset="0" stop-color="#f4f4f4"/><stop offset="1" stop-color="#c4c4c4"/></linearGradient>
<linearGradient id="sv" x1="0" y1="0" x2="0" y2="1"><stop offset="0" stop-color="#3a78c8"/><stop offset="1" stop-color="#1a4a9a"/></linearGradient>
<radialGradient id="iris" cx="0.5" cy="0.5" r="0.5"><stop offset="0.35" stop-color="#bfe6f8"/><stop offset="0.8" stop-color="#3f9fd8"/><stop offset="1" stop-color="#1a5a8a"/></radialGradient>
<radialGradient id="tw" cx="0.4" cy="0.3" r="0.8"><stop offset="0" stop-color="#ffffff"/><stop offset="0.6" stop-color="#d8d8d8"/><stop offset="1" stop-color="#8a8a8a"/></radialGradient>
<radialGradient id="tr" cx="0.4" cy="0.3" r="0.8"><stop offset="0" stop-color="#ff7a6a"/><stop offset="0.5" stop-color="#d81818"/><stop offset="1" stop-color="#7a0606"/></radialGradient>
<radialGradient id="tt" cx="0.4" cy="0.3" r="0.8"><stop offset="0" stop-color="#7ae0e0"/><stop offset="0.6" stop-color="#2aa0a8"/><stop offset="1" stop-color="#0a5a62"/></radialGradient>
<radialGradient id="tg" cx="0.4" cy="0.3" r="0.8"><stop offset="0" stop-color="#b8f06a"/><stop offset="0.5" stop-color="#48b418"/><stop offset="1" stop-color="#1a6a08"/></radialGradient>
<radialGradient id="tb" cx="0.35" cy="0.3" r="0.8"><stop offset="0" stop-color="#d8f0ff"/><stop offset="0.5" stop-color="#78b8e8"/><stop offset="1" stop-color="#2a5aa8"/></radialGradient>
<linearGradient id="to" x1="0" y1="0" x2="0" y2="1"><stop offset="0" stop-color="#ffd23a"/><stop offset="0.55" stop-color="#f08a18"/><stop offset="1" stop-color="#c81a10"/></linearGradient>
</defs><path d="M9.6,148.4Q9.6,147.4 10.6,147.4H21.6Q22.6,147.4 22.6,148.4V160H9.6Z" fill="url(#fb)" stroke="#b0b0b0" stroke-width="0.7"/><path d="M6.4,158.2H12.6L14.8,154.6H24.4Q25.2,154.6 25.2,155.4V168.2Q25.2,169 24.4,169H7.2Q6.4,169 6.4,168.2Z" fill="url(#fg)" stroke="#3f8f1c" stroke-width="0.9"/><path d="M7.6,159.4H13.2L15.4,155.8H24" stroke="#b4ec7a" stroke-width="0.8" fill="none"/><path d="M35,147.3H53.2Q54.8,147.3 54.8,148.9V166.6Q54.8,168.9 52.6,168.9H35.6L33.3,166.6V148.9Q33.3,147.3 35,147.3Z" fill="url(#sv)" stroke="#1a3f8a" stroke-width="0.8"/><rect x="37" y="148.4" width="14.6" height="8.6" rx="0.8" fill="#e8e8e8"/><rect x="37" y="152.2" width="14.6" height="1.2" fill="#bdbdbd"/><rect x="37" y="154.6" width="14.6" height="2.4" fill="#cfcfcf"/><rect x="38.4" y="161" width="11.4" height="7.6" fill="#c8c8c8" stroke="#16357a" stroke-width="0.8"/><rect x="40" y="162.2" width="3.4" height="5.4" fill="#2a62b8"/><rect x="61" y="148" width="1" height="21" fill="#c4c4c4"/><rect x="65.5" y="147.5" width="138.5" height="21.5" rx="1.5" fill="#fff" stroke="#8e8e8e" stroke-width="1"/><path d="M192.8,156.4L196.4,160L200,156.4" stroke="#6a6a6a" stroke-width="1.1" fill="none"/><path d="M210.8,153.4V149H215.6M224,149H228.8V153.4M228.8,162.4V166.8H224M215.6,166.8H210.8V162.4" stroke="#111" stroke-width="3.3" fill="none"/><path d="M218,156L221.6,159.6M221.6,156L218,159.6" stroke="#111" stroke-width="1.5"/><path d="M237.4,157.2H242L239.7,159.8Z" fill="#111"/><path d="M277,157.2H281.6L279.3,159.8Z" fill="#111"/><path d="M249,158C252.5,152.8 256,151.2 259.6,151.2C263.2,151.2 266.8,152.8 270.4,158C266.8,163 263.2,164.6 259.6,164.6C256,164.6 252.5,163 249,158Z" fill="#fbfbfb" stroke="#3a3a3a" stroke-width="1.3"/><circle cx="259.6" cy="157.8" r="5.4" fill="url(#iris)" stroke="#2a6a9a" stroke-width="0.6"/><circle cx="259.6" cy="157.8" r="2.2" fill="#0a1020"/><circle cx="258.4" cy="156.4" r="0.9" fill="#fff"/><path d="M290.6,153C293,156 288.6,160.4 288.8,164.4C289.2,167.6 293.4,167.8 295.4,165.6" stroke="#3a0a0a" stroke-width="1.4" fill="none"/><path d="M294.6,166.2L296.6,160.6L305.8,150.4L307.4,156.2L299.4,165.4Z" fill="#d81a1a" stroke="#a01010" stroke-width="0.5"/><path d="M299.6,157.2L305.8,150.4L307.4,156.2L302,162.4Z" fill="#f08a8a"/><path d="M294.6,166.2L296.6,160.6L299.4,165.4Z" fill="#f0b020"/><path d="M303,153.4L306.6,152.4" stroke="#fff" stroke-width="0.8"/><path d="M559.8,163C563.4,157.6 573.8,157.6 577.6,163C573.8,169 563.4,169 559.8,163Z" fill="#303030" stroke="#8a8a8a" stroke-width="0.9"/><path d="M561.4,164.6C565,168.6 572.4,168.6 576,164.6" stroke="#b8b8b8" stroke-width="0.9" fill="none"/><g transform="translate(568.4,153.8) rotate(-43)"><path d="M-6.6,-5.6H5.4A3.6,5.6 0 0 1 5.4,5.6H-6.6A3.6,5.6 0 0 1 -6.6,-5.6Z" fill="url(#tw)" stroke="#9a9a9a" stroke-width="0.8"/><ellipse cx="5.4" cy="0" rx="3.6" ry="5.6" fill="#f2f2f2" stroke="#9a9a9a" stroke-width="0.8"/><ellipse cx="5.8" cy="0" rx="2.1" ry="3.25" fill="#d4d4d4" stroke="#9a9a9a" stroke-width="0.64"/></g><g transform="translate(596,158) rotate(-43)"><path d="M-6.6,-8H5.4A3.6,8 0 0 1 5.4,8H-6.6A3.6,8 0 0 1 -6.6,-8Z" fill="#fbfbfb" stroke="#5a5a5a" stroke-width="1.0"/><ellipse cx="5.4" cy="0" rx="3.6" ry="8" fill="#ffffff" stroke="#5a5a5a" stroke-width="1.0"/><ellipse cx="5.8" cy="0" rx="2.1" ry="4.64" fill="#f0f0f0" stroke="#5a5a5a" stroke-width="0.80"/></g><g transform="translate(596,158) rotate(-43)"><ellipse cx="-6.6" cy="0" rx="3.2" ry="7.2" fill="none" stroke="#8a8a8a" stroke-width="0.8"/><ellipse cx="-6.2" cy="0" rx="1.9" ry="4.4" fill="none" stroke="#9a9a9a" stroke-width="0.7"/></g><rect x="610.5" y="145.5" width="25.2" height="25.2" fill="#fdfdfd" stroke="#3a7ec0" stroke-width="1"/><g transform="translate(623,158) rotate(-43)"><path d="M-6.6,-8.2H5.4A3.6,8.2 0 0 1 5.4,8.2H-6.6A3.6,8.2 0 0 1 -6.6,-8.2Z" fill="url(#tr)" stroke="#7a0a0a" stroke-width="0.7"/><ellipse cx="5.4" cy="0" rx="3.6" ry="8.2" fill="#d82020" stroke="#7a0a0a" stroke-width="0.7"/><ellipse cx="5.8" cy="0" rx="2.1" ry="4.76" fill="#7a0808" stroke="#7a0a0a" stroke-width="0.56"/></g><ellipse cx="618.6" cy="157.6" rx="1.6" ry="3.6" fill="#ffb0c8" opacity="0.8" transform="rotate(47 618.6 157.6)"/><rect x="642" y="148" width="1" height="21" fill="#c4c4c4"/><rect x="730" y="148" width="1" height="21" fill="#c4c4c4"/><ellipse cx="664" cy="166.4" rx="8" ry="1.6" fill="#9a9a9a" opacity="0.5"/><path d="M653,148L668.6,167.6" stroke="#3a3a3a" stroke-width="1.3"/><path d="M658.6,149.4C662.4,146.6 669.6,148.4 672.2,153C674.4,157.8 671,165.4 665.2,167.4C661,168.6 656.6,165.6 658,161.4C659.2,157.6 662.6,155.4 660,151.4Z" fill="url(#tt)" stroke="#0a4a52" stroke-width="0.8"/><path d="M661.4,150.6C664.6,150.4 669,152.2 670.4,155.4C667.6,154 664.6,154.8 663.6,157.4C664,154.6 663.2,152.2 661.4,150.6Z" fill="#0e6a72"/><ellipse cx="689" cy="166.8" rx="8" ry="1.6" fill="#9a9a9a" opacity="0.5"/><g transform="translate(688.6,158) rotate(-43)"><path d="M-6.6,-7.8H5.4A3.6,7.8 0 0 1 5.4,7.8H-6.6A3.6,7.8 0 0 1 -6.6,-7.8Z" fill="url(#tw)" stroke="#6a6a6a" stroke-width="0.8"/><path d="M-1,-7.8H5.4A3.6,7.8 0 0 1 5.4,7.8H-1Z" fill="url(#tg)" stroke="#1a5a08" stroke-width="0.6"/><ellipse cx="5.4" cy="0" rx="3.6" ry="7.8" fill="#58c420" stroke="#1a6a08" stroke-width="0.7"/><ellipse cx="5.8" cy="0" rx="2.1" ry="4.6" fill="#1f7a0c"/></g><path d="M679,149L697,168.4" stroke="#3a3a3a" stroke-width="1.3"/><ellipse cx="715" cy="166.8" rx="8.4" ry="1.8" fill="#9a9a9a" opacity="0.5"/><circle cx="714.4" cy="157.2" r="9.6" fill="url(#tw)" stroke="#8a8a8a" stroke-width="0.8"/><path d="M714.4,147.6A9.6,9.6 0 0 0 714.4,166.8Z" fill="url(#to)"/><ellipse cx="710" cy="152.4" rx="2.4" ry="1.6" fill="#fff" opacity="0.7"/><polygon points="745.6,148.8 751.8,151.2 754.4,157.2 752.2,163.6 746,166.8 739.4,164.8 736,158.8 738,152" fill="url(#tb)" stroke="#2a4a9a" stroke-width="1.3" stroke-linejoin="round"/><path d="M759.2,157H763.8L761.5,159.7Z" fill="#111"/></svg>
<span class="t" style="left:68.40px;top:149.20px;font-size:12px;line-height:18px;color:#222;font-weight:400;font-family:'Liberation Sans', sans-serif;transform:scaleX(0.8732);">125%</span>
<div class="b" style="left:2px;top:746px;width:767px;height:22px;background:#f0f0f0;border-top:1px solid #fafafa;"></div>
<span class="t" style="left:8.60px;top:751.60px;font-size:12px;line-height:18px;color:#1a1a1a;font-weight:700;font-family:'Liberation Sans', sans-serif;transform:scaleX(0.7798);">...</span>
<span class="t" style="left:694.00px;top:750.00px;font-size:12px;line-height:18px;color:#777;font-weight:400;font-family:'Liberation Sans', sans-serif;transform:scaleX(0.8777);">1.0.0008</span>
<div class="b" style="left:766px;top:758px;width:2px;height:2px;background:#b0b0b0;"></div>
<div class="b" style="left:763px;top:761px;width:2px;height:2px;background:#b0b0b0;"></div>
<div class="b" style="left:766px;top:761px;width:2px;height:2px;background:#b0b0b0;"></div>
<div class="b" style="left:760px;top:764px;width:2px;height:2px;background:#b0b0b0;"></div>
<div class="b" style="left:763px;top:764px;width:2px;height:2px;background:#b0b0b0;"></div>
<div class="b" style="left:766px;top:764px;width:2px;height:2px;background:#b0b0b0;"></div>
<div class="b" style="left:0px;top:0px;width:2px;height:768px;background:#7c7c7c;"></div>
<div class="b" style="left:0px;top:0px;width:2px;height:60px;background:#2a2a2a;"></div>
<div class="b" style="left:0px;top:75px;width:1.5px;height:3px;background:#b02030;"></div>
<div class="b" style="left:2px;top:173px;width:766px;height:573px;background:#d4d0c8;"></div>
<svg class="b" style="left:0px;top:0px;" width="769" height="768" viewBox="0 0 769 768"><defs>
<linearGradient id="cl" x1="0" y1="0" x2="0" y2="1"><stop offset="0" stop-color="#fdfdfd"/><stop offset="0.12" stop-color="#f2f2f2"/><stop offset="0.16" stop-color="#e9e9e9"/><stop offset="1" stop-color="#cbcbcb"/></linearGradient>
<linearGradient id="cb" x1="0" y1="0" x2="0" y2="1"><stop offset="0" stop-color="#e4e4e6"/><stop offset="0.085" stop-color="#cfcfd6"/><stop offset="0.1" stop-color="#aeaebf"/><stop offset="1" stop-color="#9696aa"/></linearGradient>
<linearGradient id="cb2" x1="0" y1="0" x2="0" y2="1"><stop offset="0" stop-color="#e4e4e6"/><stop offset="0.17" stop-color="#cfcfd6"/><stop offset="0.2" stop-color="#a9a9ba"/><stop offset="1" stop-color="#9494a8"/></linearGradient>
<linearGradient id="bt" x1="0" y1="0" x2="0" y2="1"><stop offset="0" stop-color="#555"/><stop offset="0.5" stop-color="#3e3e3e"/><stop offset="1" stop-color="#2c2c2c"/></linearGradient>
<linearGradient id="icg" x1="0" y1="0" x2="0" y2="1"><stop offset="0" stop-color="#dfe85a"/><stop offset="0.5" stop-color="#8fd48a"/><stop offset="1" stop-color="#4aa8e0"/></linearGradient>
<radialGradient id="nav" cx="0.5" cy="0.5" r="0.5"><stop offset="0" stop-color="#f4f4f4"/><stop offset="0.7" stop-color="#c4c4c4"/><stop offset="1" stop-color="#a0a0a0"/></radialGradient>
<linearGradient id="icm" x1="1" y1="0" x2="0.1" y2="1"><stop offset="0" stop-color="#eaf05a"/><stop offset="0.45" stop-color="#84d67a"/><stop offset="1" stop-color="#3a8ad8"/></linearGradient>
</defs><rect x="23.30" y="173" width="1.3" height="573" fill="#c2beb5"/><rect x="168.70" y="173" width="1.3" height="573" fill="#c2beb5"/><rect x="314.10" y="173" width="1.3" height="573" fill="#c2beb5"/><rect x="459.50" y="173" width="1.3" height="573" fill="#c2beb5"/><rect x="604.90" y="173" width="1.3" height="573" fill="#c2beb5"/><rect x="750.30" y="173" width="1.3" height="573" fill="#c2beb5"/><rect x="2" y="216.85" width="766" height="1.3" fill="#c2beb5"/><rect x="2" y="265.30" width="766" height="1.3" fill="#c2beb5"/><rect x="2" y="313.75" width="766" height="1.3" fill="#c2beb5"/><rect x="2" y="362.20" width="766" height="1.3" fill="#c2beb5"/><rect x="2" y="410.65" width="766" height="1.3" fill="#c2beb5"/><rect x="2" y="459.10" width="766" height="1.3" fill="#c2beb5"/><rect x="2" y="507.55" width="766" height="1.3" fill="#c2beb5"/><rect x="2" y="556.00" width="766" height="1.3" fill="#c2beb5"/><rect x="2" y="604.45" width="766" height="1.3" fill="#c2beb5"/><rect x="2" y="652.90" width="766" height="1.3" fill="#c2beb5"/><rect x="2" y="701.35" width="766" height="1.3" fill="#c2beb5"/><path d="M290,327.4H414" fill="none" stroke="#555555" stroke-width="2.6" stroke-linecap="round"/><path d="M162,437.4C284,437.4 292,307.6 414,307.6" fill="none" stroke="#555555" stroke-width="2.6" stroke-linecap="round"/><path d="M162,437.4C198,437.4 200,506.2 236,506.2" fill="none" stroke="#555555" stroke-width="2.6" stroke-linecap="round"/><path d="M3,437.4H24" fill="none" stroke="#555555" stroke-width="2.6" stroke-linecap="round"/><path d="M379,535.4H401" fill="none" stroke="#555555" stroke-width="2.6" stroke-linecap="round"/><path d="M616,535.4H636" fill="none" stroke="#555555" stroke-width="2.6" stroke-linecap="round"/><path d="M186,587C210,587 212,545 236,545" fill="none" stroke="#404040" stroke-width="4.3"/><path d="M186,587C210,587 212,545 236,545" fill="none" stroke="#d8d4cc" stroke-width="1.45"/><path d="M89,577.3C55,577.3 25,585 2,594.6" fill="none" stroke="#404040" stroke-width="4.3"/><path d="M89,577.3C55,577.3 25,585 2,594.6" fill="none" stroke="#d8d4cc" stroke-width="1.45"/><path d="M89,597C62,597 52,606 55.5,622C62,652 112,700 111.4,746" fill="none" stroke="#404040" stroke-width="4.3"/><path d="M89,597C62,597 52,606 55.5,622C62,652 112,700 111.4,746" fill="none" stroke="#d8d4cc" stroke-width="1.45"/><rect x="145.5" y="251.7" width="459" height="155.6" fill="none" stroke="#336a6c" stroke-width="7.4"/><circle cx="162.6" cy="327.3" r="3.5" fill="#fff" stroke="#111" stroke-width="1.8"/><circle cx="287.6" cy="327.3" r="3.5" fill="#fff" stroke="#111" stroke-width="1.8"/><circle cx="416.4" cy="307.6" r="3.5" fill="#fff" stroke="#111" stroke-width="1.8"/><circle cx="416.4" cy="327.2" r="3.5" fill="#fff" stroke="#111" stroke-width="1.8"/><circle cx="416.4" cy="346.6" r="3.5" fill="#fff" stroke="#111" stroke-width="1.8"/><circle cx="573.4" cy="327.2" r="3.5" fill="#fff" stroke="#111" stroke-width="1.8"/><circle cx="26.2" cy="437.4" r="3.5" fill="#fff" stroke="#111" stroke-width="1.8"/><circle cx="159.8" cy="437.4" r="3.5" fill="#fff" stroke="#111" stroke-width="1.8"/><circle cx="237.8" cy="506.2" r="3.5" fill="#fff" stroke="#111" stroke-width="1.8"/><circle cx="237.8" cy="525.6" r="3.5" fill="#fff" stroke="#111" stroke-width="1.8"/><circle cx="237.8" cy="545" r="3.5" fill="#fff" stroke="#111" stroke-width="1.8"/><circle cx="237.8" cy="564.4" r="3.5" fill="#fff" stroke="#111" stroke-width="1.8"/><circle cx="376" cy="535.4" r="3.5" fill="#fff" stroke="#111" stroke-width="1.8"/><circle cx="91.2" cy="577.3" r="3.5" fill="#fff" stroke="#111" stroke-width="1.8"/><circle cx="91.2" cy="597" r="3.5" fill="#fff" stroke="#111" stroke-width="1.8"/><circle cx="183.8" cy="587" r="3.5" fill="#fff" stroke="#111" stroke-width="1.8"/><circle cx="402.8" cy="535.4" r="3.5" fill="#fff" stroke="#111" stroke-width="1.8"/><circle cx="613.4" cy="535.4" r="3.5" fill="#fff" stroke="#111" stroke-width="1.8"/><circle cx="638" cy="535.4" r="3.5" fill="#fff" stroke="#111" stroke-width="1.8"/><circle cx="751.2" cy="516.2" r="3.5" fill="#fff" stroke="#111" stroke-width="1.8"/><circle cx="751.2" cy="535.6" r="3.5" fill="#fff" stroke="#111" stroke-width="1.8"/><circle cx="751.2" cy="554.8" r="3.5" fill="#fff" stroke="#111" stroke-width="1.8"/><rect x="163.6" y="308.4" width="123.4" height="41.6" rx="3.5" fill="#aaa69c" opacity="0.6"/><rect x="163.3" y="307.3" width="123.6" height="41.4" rx="3" fill="#faf55f" stroke="#6e6e5a" stroke-width="1"/><rect x="417.1" y="296.5" width="155.39999999999998" height="91" rx="3" fill="url(#cb)" stroke="#555" stroke-width="1"/><rect x="418.1" y="297.5" width="153.39999999999998" height="89" rx="2" fill="none" stroke="rgba(255,255,255,0.55)" stroke-width="1"/><rect x="421.9" y="363.5" width="145.60000000000002" height="19.19999999999999" rx="4.5" fill="url(#bt)" stroke="#1c1c1c" stroke-width="1"/><rect x="423.0" y="364.6" width="143.40000000000003" height="16.99999999999999" rx="3.6" fill="none" stroke="#858585" stroke-width="0.9"/><path d="M32,481H153V492.2Q153,495.2 150,495.2H35Q32,495.2 32,492.2Z" fill="#333"/><rect x="27.1" y="424.7" width="131.8" height="55.80000000000001" rx="3" fill="url(#cl)" stroke="#555" stroke-width="1"/><rect x="28.1" y="425.7" width="129.8" height="53.80000000000001" rx="2" fill="none" stroke="rgba(255,255,255,0.55)" stroke-width="1"/><rect x="31.5" y="456.5" width="122.19999999999999" height="19" rx="4.5" fill="url(#bt)" stroke="#1c1c1c" stroke-width="1"/><rect x="32.6" y="457.6" width="119.99999999999999" height="16.8" rx="3.6" fill="none" stroke="#858585" stroke-width="0.9"/><path d="M244,605H369.8V617.6Q369.8,620.6 366.8,620.6H247Q244,620.6 244,617.6Z" fill="#333"/><rect x="238.7" y="495.3" width="136.40000000000003" height="109.59999999999997" rx="3" fill="url(#cl)" stroke="#555" stroke-width="1"/><rect x="239.7" y="496.3" width="134.40000000000003" height="107.59999999999997" rx="2" fill="none" stroke="rgba(255,255,255,0.55)" stroke-width="1"/><rect x="243.5" y="581.7" width="126.80000000000001" height="18.59999999999991" rx="4.5" fill="url(#bt)" stroke="#1c1c1c" stroke-width="1"/><rect x="244.6" y="582.8000000000001" width="124.60000000000001" height="16.39999999999991" rx="3.6" fill="none" stroke="#858585" stroke-width="0.9"/><rect x="92.1" y="566.3" width="90.80000000000001" height="41.60000000000002" rx="3" fill="url(#cb2)" stroke="#555" stroke-width="1"/><rect x="93.1" y="567.3" width="88.80000000000001" height="39.60000000000002" rx="2" fill="none" stroke="rgba(255,255,255,0.55)" stroke-width="1"/><rect x="403.7" y="522.5" width="208.8" height="55.799999999999955" rx="3" fill="url(#cl)" stroke="#555" stroke-width="1"/><rect x="404.7" y="523.5" width="206.8" height="53.799999999999955" rx="2" fill="none" stroke="rgba(255,255,255,0.55)" stroke-width="1"/><rect x="408.1" y="554.5" width="199.0" height="19.200000000000045" rx="4.5" fill="url(#bt)" stroke="#1c1c1c" stroke-width="1"/><rect x="409.20000000000005" y="555.6" width="196.8" height="17.000000000000046" rx="3.6" fill="none" stroke="#858585" stroke-width="0.9"/><path d="M644,567H745.4V578.8Q745.4,581.8 742.4,581.8H647Q644,581.8 644,578.8Z" fill="#333"/><rect x="638.9" y="504.9" width="111.39999999999998" height="61.60000000000002" rx="3" fill="url(#cl)" stroke="#555" stroke-width="1"/><rect x="639.9" y="505.9" width="109.39999999999998" height="59.60000000000002" rx="2" fill="none" stroke="rgba(255,255,255,0.55)" stroke-width="1"/><rect x="2.5" y="719.5" width="8" height="28" fill="url(#cl)" stroke="#333" stroke-width="1"/><rect x="3" y="730" width="7" height="16" fill="#8a8a8a" opacity="0.7"/><path d="M87.1,431.0H98.1Q99.0,431.0 99.0,431.9V443.5H83.2Q82.3,443.5 82.3,442.59999999999997V435.0Z" fill="url(#icg)" stroke="#141414" stroke-width="1.6" stroke-linejoin="round"/><path d="M82.4,435.09999999999997L87.2,431.09999999999997V435.09999999999997Z" fill="#0a0a0a"/><path d="M88.5,432.7H97.9" stroke="#fff04a" stroke-width="0.9" stroke-dasharray="1 1"/><circle cx="96.4" cy="442.59999999999997" r="4.2" fill="#0a0a0a"/><path d="M96.4,439.9L97.2,441.79999999999995L99.10000000000001,442.59999999999997L97.2,443.4L96.4,445.29999999999995L95.60000000000001,443.4L93.7,442.59999999999997L95.60000000000001,441.79999999999995Z" fill="#fff"/><path d="M304.1,527.8H315.1Q316.0,527.8 316.0,528.7V540.3H300.2Q299.3,540.3 299.3,539.4V531.8Z" fill="url(#icg)" stroke="#141414" stroke-width="1.6" stroke-linejoin="round"/><path d="M299.4,531.9L304.2,527.9V531.9Z" fill="#0a0a0a"/><path d="M305.5,529.5H314.9" stroke="#fff04a" stroke-width="0.9" stroke-dasharray="1 1"/><circle cx="313.4" cy="539.4" r="4.2" fill="#0a0a0a"/><polygon points="313.4,536.6 315.79999999999995,538.0 315.79999999999995,540.8 313.4,542.1999999999999 311.0,540.8 311.0,538.0" fill="#f4f4f4"/><circle cx="313.4" cy="539.4" r="0.95" fill="#0a0a0a"/><polygon points="458.09999999999997,532.8000000000001 469.09999999999997,527.8000000000001 475.5,532.0 464.29999999999995,541.2" fill="#9a9a9a" opacity="0.45"/><polygon points="456.9,530.6 468.09999999999997,525.8000000000001 474.59999999999997,529.7 463.5,538.6" fill="url(#icm)" stroke="#3c3c3c" stroke-width="1" stroke-linejoin="round"/><circle cx="471.2" cy="540.8000000000001" r="4.2" fill="#0a0a0a"/><path d="M469.9,538.7L473.5,540.8000000000001L469.9,542.9000000000001Z" fill="#fff"/><polygon points="687.1,532.8000000000001 698.1,527.8000000000001 704.5,532.0 693.3,541.2" fill="#9a9a9a" opacity="0.45"/><polygon points="685.9,530.6 697.1,525.8000000000001 703.6,529.7 692.5,538.6" fill="url(#icm)" stroke="#3c3c3c" stroke-width="1" stroke-linejoin="round"/><circle cx="700.1999999999999" cy="540.8000000000001" r="4.2" fill="#0a0a0a"/><ellipse cx="700.1999999999999" cy="540.8000000000001" rx="3" ry="1.9" fill="#fff"/><circle cx="700.1999999999999" cy="540.8000000000001" r="1.05" fill="#0a0a0a"/><path d="M486.4,319.4H497.4L500.4,322.4V333Q500.4,334.4 499,334.4H486.4Q485.2,334.4 485.2,333V320.6Q485.2,319.4 486.4,319.4Z" fill="url(#icg)" stroke="#1a1a1a" stroke-width="1.5"/><rect x="488.4" y="321.6" width="7" height="2.2" fill="#1a1a1a"/><circle cx="492.7" cy="329.2" r="1.9" fill="#1a1a1a"/><path d="M117.6,582.4C121,585.4 124.6,585.8 128,584.6" stroke="#1a2f9a" stroke-width="2.6" fill="none"/><path d="M118,588.1C121,588.2 124,588 127,587.2" stroke="#28b0a8" stroke-width="1.9" fill="none"/><path d="M121.6,592.2C123.6,590.6 125.4,589.2 127.4,587.6" stroke="#3aa82a" stroke-width="2" fill="none"/><path d="M125.4,595.2C125.8,593 126.6,591 127.8,588.4" stroke="#e8a020" stroke-width="1.8" fill="none" stroke-dasharray="1.6 0.6"/><path d="M131.8,596C129.8,592.6 128.8,589.6 129.4,586.2" stroke="#e01818" stroke-width="2.3" fill="none"/><path d="M127.6,586.6L132.6,581.2" stroke="#0a0a0a" stroke-width="3.2"/><polygon points="136.8,577 129,579.6 135,585.2" fill="#0a0a0a"/><path d="M712,703.6L716.6,703.2L720.4,706.4L717.4,709.4L714.4,708Z" fill="#0a0a0a"/><circle cx="721.8" cy="704.4" r="3.4" fill="#0a0a0a"/><circle cx="727.4" cy="701.6" r="3.2" fill="#0a0a0a"/><circle cx="718.6" cy="714" r="4" fill="#0a0a0a"/><circle cx="720" cy="720" r="3.6" fill="#0a0a0a"/><circle cx="738" cy="717.6" r="19" fill="url(#nav)" stroke="#0a0a0a" stroke-width="1.2"/><circle cx="738" cy="717.6" r="17.6" fill="none" stroke="#fff" stroke-width="1.4"/><path d="M723.6,712.2L728.6,706.4L730,712.4Z M746,703.2L752.4,706.6L747,709.6Z M752.6,723.6L747.6,729.6L746.6,723.4Z M730.6,732.4L723.8,728.4L729.4,725.6Z" fill="#fff"/></svg>
<span class="t" style="left:189.60px;top:318.55px;font-size:10.5px;line-height:16.5px;color:#6b8a2a;font-weight:400;font-family:'Liberation Mono', monospace;transform:scaleX(0.9967);">5_Scenario</span>
<span class="t" style="left:435.40px;top:299.55px;font-size:10.5px;line-height:16.5px;color:#2e2e2e;font-weight:400;font-family:'Liberation Sans', sans-serif;transform:scaleX(0.9870);">ProjectId</span>
<span class="t" style="left:448.60px;top:318.95px;font-size:10.5px;line-height:16.5px;color:#2e2e2e;font-weight:400;font-family:'Liberation Sans', sans-serif;transform:scaleX(0.9889);">Name</span>
<span class="t" style="left:423.20px;top:338.55px;font-size:10.5px;line-height:16.5px;color:#2e2e2e;font-weight:400;font-family:'Liberation Sans', sans-serif;transform:scaleX(1.0110);">Description</span>
<span class="t" style="left:509.00px;top:318.95px;font-size:10.5px;line-height:16.5px;color:#2e2e2e;font-weight:400;font-family:'Liberation Sans', sans-serif;transform:scaleX(0.9863);">SnapshotId</span>
<span class="t" style="left:477.40px;top:364.55px;font-size:10.5px;line-height:16.5px;color:#f2f2f2;font-weight:400;font-family:'Liberation Sans', sans-serif;transform:scaleX(1.0534);">Create</span>
<span class="t" style="left:33.30px;top:429.35px;font-size:10.5px;line-height:16.5px;color:#2e2e2e;font-weight:400;font-family:'Liberation Sans', sans-serif;transform:scaleX(0.9894);">ProjectId</span>
<span class="t" style="left:107.30px;top:429.35px;font-size:10.5px;line-height:16.5px;color:#2e2e2e;font-weight:400;font-family:'Liberation Sans', sans-serif;transform:scaleX(0.9870);">ProjectId</span>
<span class="t" style="left:63.50px;top:457.35px;font-size:10.5px;line-height:16.5px;color:#f2f2f2;font-weight:400;font-family:'Liberation Sans', sans-serif;transform:scaleX(0.9787);">Load Project</span>
<span class="t" style="left:60.00px;top:479.35px;font-size:10.5px;line-height:16.5px;color:#e0e0e0;font-weight:400;font-family:'Liberation Sans', sans-serif;transform:scaleX(0.9258);">5_PWC_Dubai</span>
<span class="t" style="left:250.20px;top:498.15px;font-size:10.5px;line-height:16.5px;color:#2e2e2e;font-weight:400;font-family:'Liberation Sans', sans-serif;transform:scaleX(0.9943);">ProjectId</span>
<span class="t" style="left:251.20px;top:517.55px;font-size:10.5px;line-height:16.5px;color:#2e2e2e;font-weight:400;font-family:'Liberation Sans', sans-serif;transform:scaleX(0.9435);">Analyses</span>
<span class="t" style="left:245.50px;top:537.15px;font-size:10.5px;line-height:16.5px;color:#2e2e2e;font-weight:400;font-family:'Liberation Sans', sans-serif;transform:scaleX(0.9957);">Geometry</span>
<span class="t" style="left:257.40px;top:556.35px;font-size:10.5px;line-height:16.5px;color:#2e2e2e;font-weight:400;font-family:'Liberation Sans', sans-serif;transform:scaleX(1.0042);">Update</span>
<span class="t" style="left:324.30px;top:527.35px;font-size:10.5px;line-height:16.5px;color:#2e2e2e;font-weight:400;font-family:'Liberation Sans', sans-serif;transform:scaleX(0.9435);">Analyses</span>
<span class="t" style="left:289.30px;top:581.85px;font-size:10.5px;line-height:16.5px;color:#f2f2f2;font-weight:400;font-family:'Liberation Sans', sans-serif;transform:scaleX(1.0042);">Update</span>
<span class="t" style="left:273.50px;top:603.85px;font-size:10.5px;line-height:16.5px;color:#e0e0e0;font-weight:400;font-family:'Liberation Sans', sans-serif;transform:scaleX(0.9996);">+41 Geometry</span>
<span class="t" style="left:98.60px;top:569.15px;font-size:10.5px;line-height:16.5px;color:#2e2e2e;font-weight:400;font-family:'Liberation Sans', sans-serif;transform:scaleX(0.8716);">D1</span>
<span class="t" style="left:98.60px;top:588.75px;font-size:10.5px;line-height:16.5px;color:#2e2e2e;font-weight:400;font-family:'Liberation Sans', sans-serif;transform:scaleX(0.8716);">D2</span>
<span class="t" style="left:144.40px;top:578.55px;font-size:10.5px;line-height:16.5px;color:#2e2e2e;font-weight:400;font-family:'Liberation Sans', sans-serif;transform:scaleX(0.9273);">Result</span>
<span class="t" style="left:410.20px;top:527.15px;font-size:10.5px;line-height:16.5px;color:#2e2e2e;font-weight:400;font-family:'Liberation Sans', sans-serif;transform:scaleX(0.9435);">Analyses</span>
<span class="t" style="left:483.00px;top:527.15px;font-size:10.5px;line-height:16.5px;color:#2e2e2e;font-weight:400;font-family:'Liberation Sans', sans-serif;transform:scaleX(1.0077);">Pedestrian Wind Comfort</span>
<span class="t" style="left:498.60px;top:555.15px;font-size:10.5px;line-height:16.5px;color:#f2f2f2;font-weight:400;font-family:'Liberation Sans', sans-serif;transform:scaleX(0.9137);">Run</span>
<span class="t" style="left:645.20px;top:527.15px;font-size:10.5px;line-height:16.5px;color:#2e2e2e;font-weight:400;font-family:'Liberation Sans', sans-serif;transform:scaleX(0.9311);">Results</span>
<span class="t" style="left:710.70px;top:507.55px;font-size:10.5px;line-height:16.5px;color:#2e2e2e;font-weight:400;font-family:'Liberation Sans', sans-serif;transform:scaleX(0.9736);">Mesh</span>
<span class="t" style="left:710.70px;top:527.35px;font-size:10.5px;line-height:16.5px;color:#2e2e2e;font-weight:400;font-family:'Liberation Sans', sans-serif;transform:scaleX(0.9468);">Data</span>
<span class="t" style="left:710.70px;top:546.35px;font-size:10.5px;line-height:16.5px;color:#2e2e2e;font-weight:400;font-family:'Liberation Sans', sans-serif;transform:scaleX(0.9722);">Colors</span>
<span class="t" style="left:666.60px;top:565.25px;font-size:10.5px;line-height:16.5px;color:#e0e0e0;font-weight:400;font-family:'Liberation Sans', sans-serif;transform:scaleX(1.0117);">Quad-Mesh</span>
<div class="b" style="left:768px;top:0px;width:227px;height:768px;background:#333333;"></div>
<div class="b" style="left:768px;top:20px;width:227px;height:5px;background:#272727;"></div>
<div class="b" style="left:768px;top:24px;width:227px;height:1px;background:#c8c8c8;"></div>
<div class="b" style="left:768px;top:25px;width:227px;height:18px;background:#252525;"></div>
<div class="b" style="left:768px;top:43px;width:227px;height:21px;background:#454545;"></div>
<div class="b" style="left:768px;top:64px;width:227px;height:28px;background:#333333;"></div>
<div class="b" style="left:768px;top:91px;width:227px;height:2px;background:#3e3e3e;"></div>
<div class="b" style="left:985px;top:20px;width:10px;height:4px;background:#1e1e1e;"></div>
<div class="b" style="left:770px;top:93px;width:225px;height:675px;background:#333333;border-radius:6px 6px 0 0;"></div>
<div class="b" style="left:768px;top:93px;width:2px;height:631px;background:linear-gradient(90deg,#b4b4b4,#8e8e8e);"></div>
<div class="b" style="left:773px;top:112px;width:200px;height:1px;background:#3a3a3a;"></div>
<div class="b" style="left:772.6px;top:193.8px;width:198.2px;height:552.8px;background:#232323;"></div>
<div class="b" style="left:772.6px;top:193.8px;width:198.2px;height:21.4px;background:#272727;border-top:1px solid #454545;border-bottom:1px solid #454545;"></div>
<div class="b" style="left:904.1px;top:194px;width:1px;height:21px;background:#454545;"></div>
<div class="b" style="left:923.5px;top:194px;width:1px;height:21px;background:#454545;"></div>
<div class="b" style="left:962.8px;top:194px;width:1px;height:21px;background:#454545;"></div>
<div class="b" style="left:772.6px;top:233.5px;width:198.2px;height:1px;background:repeating-linear-gradient(90deg,#3c3c3c 0 1px,#2a2a2a 1px 2px);"></div>
<div class="b" style="left:772.6px;top:251.9px;width:198.2px;height:1px;background:repeating-linear-gradient(90deg,#3c3c3c 0 1px,#2a2a2a 1px 2px);"></div>
<div class="b" style="left:772.6px;top:270.1px;width:198.2px;height:1px;background:repeating-linear-gradient(90deg,#3c3c3c 0 1px,#2a2a2a 1px 2px);"></div>
<div class="b" style="left:772.6px;top:288.5px;width:198.2px;height:1px;background:repeating-linear-gradient(90deg,#3c3c3c 0 1px,#2a2a2a 1px 2px);"></div>
<div class="b" style="left:772.6px;top:306.9px;width:198.2px;height:1px;background:repeating-linear-gradient(90deg,#3c3c3c 0 1px,#2a2a2a 1px 2px);"></div>
<div class="b" style="left:975px;top:146.4px;width:20px;height:600.4px;background:#454545;border-radius:6px 0 0 0;"></div>
<div class="b" style="left:769px;top:747px;width:226px;height:21px;background:#353535;"></div>
<div class="b" style="left:790.6px;top:748.4px;width:42.6px;height:17.4px;background:#44589a;border-radius:2px;"></div>
<div class="b" style="left:779.6px;top:736.4px;width:48px;height:7.6px;background:#7a7a7a;border-radius:4px;"></div>
<div class="b" style="left:772.6px;top:166.4px;width:198.2px;height:21.2px;background:#575757;border:1px solid #6c6c6c;border-radius:11px;"></div>
<span class="t" style="left:773.50px;top:94.40px;font-size:12px;line-height:18px;color:#9a9a9a;font-weight:400;font-family:'Liberation Sans', sans-serif;transform:scaleX(0.8746);">Layers</span>
<span class="t" style="left:790.40px;top:168.60px;font-size:12px;line-height:18px;color:#c4c4c4;font-weight:400;font-family:'Liberation Sans', sans-serif;transform:scaleX(0.8942);">Search</span>
<span class="t" style="left:777.70px;top:196.40px;font-size:12px;line-height:18px;color:#dcdcdc;font-weight:400;font-family:'Liberation Sans', sans-serif;transform:scaleX(0.8861);">Layer</span>
<span class="t" style="left:938.40px;top:196.40px;font-size:12px;line-height:18px;color:#dcdcdc;font-weight:400;font-family:'Liberation Sans', sans-serif;transform:scaleX(0.9121);">On</span>
<span class="t" style="left:789.30px;top:216.60px;font-size:12px;line-height:18px;color:#ffffff;font-weight:700;font-family:'Liberation Sans', sans-serif;transform:scaleX(0.9762);">Default</span>
<span class="t" style="left:789.30px;top:235.00px;font-size:12px;line-height:18px;color:#e0e0e0;font-weight:400;font-family:'Liberation Sans', sans-serif;transform:scaleX(0.9382);">Context</span>
<span class="t" style="left:789.30px;top:253.60px;font-size:12px;line-height:18px;color:#e0e0e0;font-weight:400;font-family:'Liberation Sans', sans-serif;transform:scaleX(0.9290);">Design1</span>
<span class="t" style="left:789.30px;top:272.00px;font-size:12px;line-height:18px;color:#e0e0e0;font-weight:400;font-family:'Liberation Sans', sans-serif;transform:scaleX(0.9381);">Design3</span>
<span class="t" style="left:789.30px;top:290.20px;font-size:12px;line-height:18px;color:#e0e0e0;font-weight:400;font-family:'Liberation Sans', sans-serif;transform:scaleX(0.9381);">Design5</span>
<span class="t" style="left:770.00px;top:749.40px;font-size:12px;line-height:18px;color:#b8b8b8;font-weight:400;font-family:'Liberation Sans', sans-serif;transform:scaleX(0.8003);">ry</span>
<span class="t" style="left:798.40px;top:749.00px;font-size:12px;line-height:18px;color:#ffffff;font-weight:700;font-family:'Liberation Sans', sans-serif;transform:scaleX(0.9476);">Filter</span>
<span class="t" style="left:846.70px;top:749.00px;font-size:12px;line-height:18px;color:#cfcfcf;font-weight:400;font-family:'Liberation Sans', sans-serif;transform:scaleX(0.8820);">CPU use: 2.4 %</span>
<svg class="b" style="left:0px;top:0px;" width="995" height="768" viewBox="0 0 995 768"><defs>
<radialGradient id="hq" cx="0.4" cy="0.3" r="0.8"><stop offset="0" stop-color="#6a9af0"/><stop offset="0.6" stop-color="#1f4fc0"/><stop offset="1" stop-color="#0a2a7a"/></radialGradient>
</defs><path d="M986.90,54.00L989.30,54.00" stroke="#c4c4c4" stroke-width="2.3"/><path d="M985.87,56.47L987.57,58.17" stroke="#c4c4c4" stroke-width="2.3"/><path d="M983.40,57.50L983.40,59.90" stroke="#c4c4c4" stroke-width="2.3"/><path d="M980.93,56.47L979.23,58.17" stroke="#c4c4c4" stroke-width="2.3"/><path d="M979.90,54.00L977.50,54.00" stroke="#c4c4c4" stroke-width="2.3"/><path d="M980.93,51.53L979.23,49.83" stroke="#c4c4c4" stroke-width="2.3"/><path d="M983.40,50.50L983.40,48.10" stroke="#c4c4c4" stroke-width="2.3"/><path d="M985.87,51.53L987.57,49.83" stroke="#c4c4c4" stroke-width="2.3"/><circle cx="983.4" cy="54" r="3.2" fill="none" stroke="#c4c4c4" stroke-width="2.1"/><path d="M987.50,103.00L989.90,103.00" stroke="#c4c4c4" stroke-width="2.3"/><path d="M986.47,105.47L988.17,107.17" stroke="#c4c4c4" stroke-width="2.3"/><path d="M984.00,106.50L984.00,108.90" stroke="#c4c4c4" stroke-width="2.3"/><path d="M981.53,105.47L979.83,107.17" stroke="#c4c4c4" stroke-width="2.3"/><path d="M980.50,103.00L978.10,103.00" stroke="#c4c4c4" stroke-width="2.3"/><path d="M981.53,100.53L979.83,98.83" stroke="#c4c4c4" stroke-width="2.3"/><path d="M984.00,99.50L984.00,97.10" stroke="#c4c4c4" stroke-width="2.3"/><path d="M986.47,100.53L988.17,98.83" stroke="#c4c4c4" stroke-width="2.3"/><circle cx="984" cy="103" r="3.2" fill="none" stroke="#c4c4c4" stroke-width="2.1"/><rect x="979.5" y="26.5" width="14" height="16" rx="1.5" fill="#2a2a2a" stroke="#9a9a9a" stroke-width="1"/><rect x="978" y="33.6" width="17" height="1.4" fill="#f0f0f0"/><path d="M983.6,31.6L986.5,28.6L989.4,31.6Z" fill="#f0f0f0"/><path d="M983.6,37L986.5,40L989.4,37Z" fill="#f0f0f0"/><g transform="translate(782.4,126.8) scale(0.8)"><polygon points="-7.4,1.6 0.4,6.4 7.6,1.4 7.6,3.4 0.4,8.4 -7.4,3.6" fill="#2a50c0"/><polygon points="-7.4,-1 0.4,3.8 7.6,-1.2 7.6,1 0.4,6 -7.4,1.2" fill="#f4f4f4"/><polygon points="-7.4,-3.8 0.4,1 7.6,-4 7.6,-1.8 0.4,3.2 -7.4,-1.6" fill="#e01818"/><polygon points="-7.4,-4.2 -0.6,-7.4 7.6,-4.4 0.4,0.6" fill="#e0a070"/></g><path d="M783.2,132.2H790.4M786.8,128.6V135.8" stroke="#f4f4f4" stroke-width="4" stroke-linejoin="round"/><path d="M784,132.2H789.6M786.8,129.4V135" stroke="#0a0a0a" stroke-width="2"/><path d="M797.4,122.4H805V126.6Q805,130 801.2,131Q797.4,130 797.4,126.6Z" fill="#5e5e5e" stroke="#8e8e8e" stroke-width="1"/><path d="M799.6,131V134.4H803" stroke="#8e8e8e" stroke-width="1.2" fill="none"/><circle cx="801.6" cy="134.6" r="0.9" fill="#8e8e8e"/><path d="M804,127.4H811.6V131.6Q811.6,135.2 807.8,136.2Q804,135.2 804,131.6Z" fill="#5e5e5e" stroke="#8e8e8e" stroke-width="1"/><path d="M819,122.2L831.4,135M831.4,122.2L819,135" stroke="#8e8e8e" stroke-width="2.5"/><path d="M819,122.2L831.4,135M831.4,122.2L819,135" stroke="#5a5a5a" stroke-width="0.8"/><path d="M847,121.6A6.8,7 0 1 0 847,135.6" stroke="#8e8e8e" stroke-width="1.2" fill="none"/><path d="M844,125H853.4V130.6Q853.4,135 848.7,136.2Q844,135 844,130.6Z" fill="#5e5e5e" stroke="#8e8e8e" stroke-width="1.1"/><path d="M845.6,127.4H851.6" stroke="#7a7a7a" stroke-width="0.8"/><path d="M861.6,131.8L868,125L874.4,131.8Z" fill="#5a5a5a" stroke="#8e8e8e" stroke-width="1.2" stroke-linejoin="round"/><path d="M883,126L889.4,132.8L895.8,126Z" fill="#5a5a5a" stroke="#8e8e8e" stroke-width="1.2" stroke-linejoin="round"/><path d="M914,122.6L906.6,128.8L914,135Z" fill="#5a5a5a" stroke="#8e8e8e" stroke-width="1.2" stroke-linejoin="round"/><path d="M926.4,122.8H936.6L932.8,128.4V135.2L930.2,133.4V128.4Z" fill="#3a7ae0" stroke="#8ab8ff" stroke-width="0.8" stroke-linejoin="round"/><rect x="947.4" y="122.2" width="3" height="2.8" fill="#f4f4f4"/><rect x="947.4" y="125.7" width="3" height="2.8" fill="#f4f4f4"/><rect x="947.4" y="129.2" width="3" height="2.8" fill="#f4f4f4"/><rect x="947.4" y="132.7" width="3" height="2.8" fill="#f4f4f4"/><rect x="951.1" y="122.2" width="3" height="2.8" fill="#f4f4f4"/><rect x="951.1" y="125.7" width="3" height="2.8" fill="#f4f4f4"/><rect x="951.1" y="129.2" width="3" height="2.8" fill="#f4f4f4"/><rect x="951.1" y="132.7" width="3" height="2.8" fill="#f4f4f4"/><rect x="954.8" y="122.2" width="3" height="2.8" fill="#f4f4f4"/><rect x="954.8" y="125.7" width="3" height="2.8" fill="#f4f4f4"/><rect x="954.8" y="129.2" width="3" height="2.8" fill="#f4f4f4"/><rect x="954.8" y="132.7" width="3" height="2.8" fill="#f4f4f4"/><rect x="776.8" y="145.0" width="12" height="1.8" rx="0.6" fill="#e8e8e8"/><rect x="776.8" y="149.7" width="12" height="1.8" rx="0.6" fill="#e8e8e8"/><rect x="776.8" y="154.4" width="12" height="1.8" rx="0.6" fill="#e8e8e8"/><circle cx="804.4" cy="150.6" r="7.2" fill="url(#hq)" stroke="#0a2060" stroke-width="0.6"/><text x="804.4" y="155" text-anchor="middle" font-family="Liberation Serif, serif" font-weight="700" font-size="12.5" fill="#fff">?</text><circle cx="781.6" cy="176.4" r="3.8" fill="none" stroke="#e0e0e0" stroke-width="1.3"/><path d="M784.4,179.4L788,183" stroke="#e0e0e0" stroke-width="1.5"/><path d="M908.4,225.2L911.4,228.6L921.2,219.8" stroke="#d8d8d8" stroke-width="2.6" fill="none"/><path d="M908.4,225.2L911.4,228.6L921.2,219.8" stroke="#2a2a2a" stroke-width="0.9" fill="none"/><path d="M940.6,241.2A4,4 0 1 1 948.6,241.2Q948.6,243.6 946.6,245.6V248.6H942.6V245.6Q940.6,243.6 940.6,241.2Z" fill="#f8d820"/><rect x="943.0" y="247.0" width="3.2" height="2.2" fill="#e08a10"/><path d="M940.6,259.6A4,4 0 1 1 948.6,259.6Q948.6,262 946.6,264V267H942.6V264Q940.6,262 940.6,259.6Z" fill="#74b0e0"/><rect x="943.0" y="265.4" width="3.2" height="2.2" fill="#4a86c0"/><path d="M940.6,278.0A4,4 0 1 1 948.6,278.0Q948.6,280.4 946.6,282.4V285.4H942.6V282.4Q940.6,280.4 940.6,278.0Z" fill="#74b0e0"/><rect x="943.0" y="283.79999999999995" width="3.2" height="2.2" fill="#4a86c0"/><path d="M940.6,296.40000000000003A4,4 0 1 1 948.6,296.40000000000003Q948.6,298.8 946.6,300.8V303.8H942.6V300.8Q940.6,298.8 940.6,296.40000000000003Z" fill="#74b0e0"/><rect x="943.0" y="302.2" width="3.2" height="2.2" fill="#4a86c0"/><rect x="968.8" y="240.4" width="2" height="7.6" fill="#f0e060"/><rect x="968.8" y="258.79999999999995" width="2" height="7.6" fill="#f0e060"/><rect x="968.8" y="277.4" width="2" height="7.6" fill="#f0e060"/><rect x="968.8" y="295.59999999999997" width="2" height="7.6" fill="#f0e060"/><g transform="translate(984.2,129.6) scale(0.95)"><polygon points="-7.4,1.6 0.4,6.4 7.6,1.4 7.6,3.4 0.4,8.4 -7.4,3.6" fill="#2a50c0"/><polygon points="-7.4,-1 0.4,3.8 7.6,-1.2 7.6,1 0.4,6 -7.4,1.2" fill="#f4f4f4"/><polygon points="-7.4,-3.8 0.4,1 7.6,-4 7.6,-1.8 0.4,3.2 -7.4,-1.6" fill="#e01818"/><polygon points="-7.4,-4.2 -0.6,-7.4 7.6,-4.4 0.4,0.6" fill="#e0a070"/></g><path d="M984.00,158.80A5,5 0 0 1 987.64,160.37" stroke="#e02020" stroke-width="2.6" fill="none"/><path d="M987.54,160.26A5,5 0 0 1 989.00,163.95" stroke="#e0a020" stroke-width="2.6" fill="none"/><path d="M989.00,163.80A5,5 0 0 1 987.43,167.44" stroke="#e0e020" stroke-width="2.6" fill="none"/><path d="M987.54,167.34A5,5 0 0 1 983.85,168.80" stroke="#30c030" stroke-width="2.6" fill="none"/><path d="M984.00,168.80A5,5 0 0 1 980.36,167.23" stroke="#20c0c0" stroke-width="2.6" fill="none"/><path d="M980.46,167.34A5,5 0 0 1 979.00,163.65" stroke="#3050e0" stroke-width="2.6" fill="none"/><path d="M979.00,163.80A5,5 0 0 1 980.57,160.16" stroke="#a030d0" stroke-width="2.6" fill="none"/><path d="M980.46,160.26A5,5 0 0 1 984.15,158.80" stroke="#e020a0" stroke-width="2.6" fill="none"/><circle cx="984" cy="163.8" r="6.6" fill="none" stroke="#1a1a1a" stroke-width="0.9"/><circle cx="984" cy="163.8" r="3.4" fill="#2a2a2a"/><rect x="976.6" y="191.4" width="14.8" height="11.6" fill="#e8e8e8" stroke="#1a1a1a" stroke-width="1"/><rect x="977.6" y="197" width="12.8" height="5.4" fill="#cfcfcf"/><rect x="979.6" y="203.4" width="9" height="2.2" fill="#0a0a0a"/><rect x="976.6" y="226" width="15" height="13.6" fill="#2a56c0" stroke="#e8e8e8" stroke-width="1"/><rect x="976.6" y="226" width="15" height="3" fill="#e8e8e8"/><text x="984.2" y="238.6" text-anchor="middle" font-family="Liberation Serif, serif" font-weight="700" font-size="10.5" fill="#fff">?</text><path d="M977.4,263.6H980.4L981.6,261.6H986.6L987.8,263.6H990.6Q991.6,263.6 991.6,264.6V272.6Q991.6,273.6 990.6,273.6H977.4Q976.4,273.6 976.4,272.6V264.6Q976.4,263.6 977.4,263.6Z" fill="#5a5a5a" stroke="#d0d0d0" stroke-width="1"/><circle cx="984.6" cy="268.6" r="3.4" fill="#3a3a3a" stroke="#d0d0d0" stroke-width="1"/><rect x="978" y="265.4" width="2.2" height="6.4" fill="#d0d0d0"/><path d="M978.2,307.6Q979.2,305.6 979.2,301.6Q979.2,296.6 984.2,296Q989.2,296.6 989.2,301.6Q989.2,305.6 990.4,307.6Z" fill="#1e6ee0"/><rect x="977.2" y="307" width="14" height="1.8" fill="#1458b8"/><circle cx="984.2" cy="310" r="1.5" fill="#1e6ee0"/><circle cx="981.4" cy="338.6" r="3.8" fill="#f0f0f0" stroke="#9a9a9a" stroke-width="0.6"/><path d="M985,342.6L988,334.4L991.2,342.6Z" fill="#fafafa" stroke="#9a9a9a" stroke-width="0.6"/><path d="M981,334.6L986.6,333.6L985,342.6H980Z" fill="#d0d0d0" opacity="0.9"/><rect x="975.8" y="751.6" width="11.6" height="11.6" fill="none" stroke="#e0e0e0" stroke-width="1.6"/><rect x="983" y="751.6" width="4.4" height="11.6" fill="#e0e0e0"/></svg>
</body></html>
